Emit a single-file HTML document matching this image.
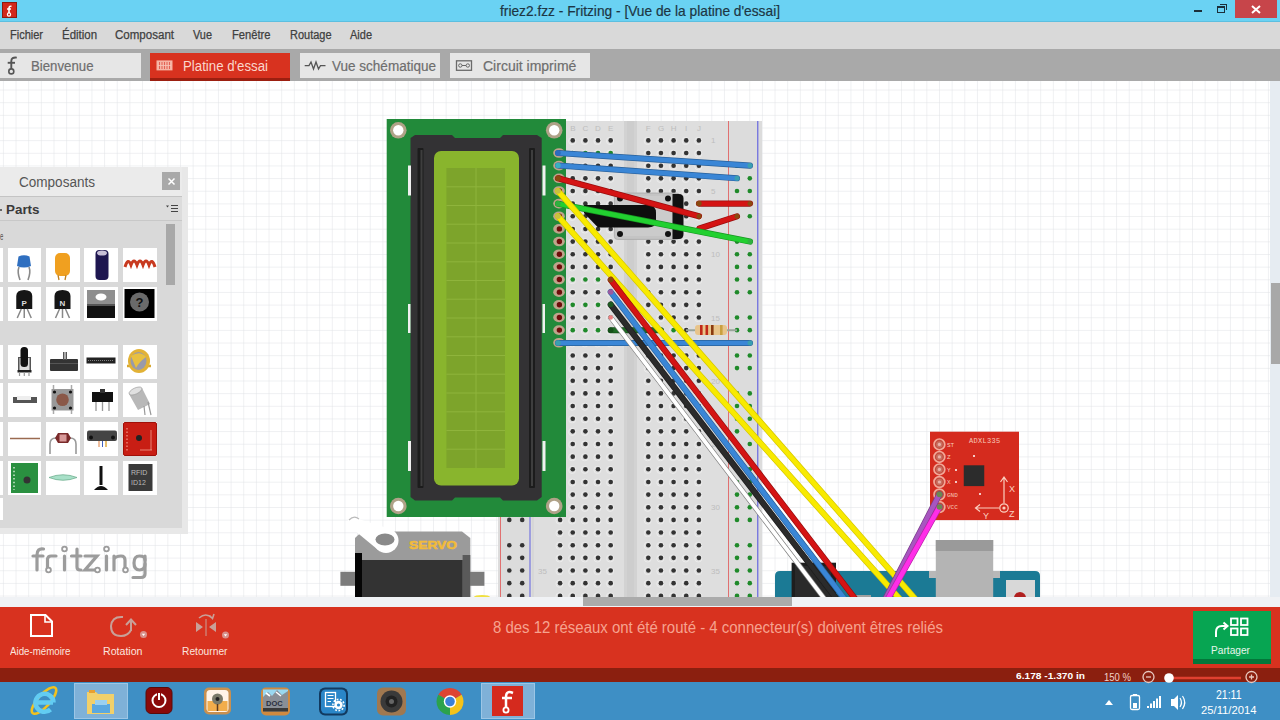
<!DOCTYPE html>
<html><head><meta charset="utf-8"><style>*{margin:0;padding:0;box-sizing:border-box}
html,body{width:1280px;height:720px;overflow:hidden;background:#fff;font-family:"Liberation Sans",sans-serif}
.a{position:absolute}
svg{position:absolute;overflow:visible}
</style></head><body>
<div class="a" style="left:0;top:0;width:1280px;height:22px;background:#6ad2f3"></div>
<div class="a" style="left:0;top:21px;width:1280px;height:1px;background:#5cbfe0"></div>
<div class="a" style="left:2px;top:2px;width:15px;height:16px;background:#d2281c;border:1px solid #8e1a10"></div>
<svg style="left:2px;top:2px" width="15" height="16"><path d="M9.5 4.5 Q7.5 3.5 7 6 L7 11 M5 7 L9 7" stroke="#fff" stroke-width="1.6" fill="none"/><circle cx="7" cy="12.5" r="1.6" stroke="#fff" stroke-width="1.2" fill="none"/></svg>
<div class="a" style="left:500px;top:3.00px;font-size:15px;line-height:15px;color:#1d3644;font-weight:normal;font-family:'Liberation Sans',sans-serif;white-space:nowrap;transform:scaleX(0.9157);transform-origin:0 0;-webkit-text-stroke:0.2px #1d3644;">friez2.fzz - Fritzing - [Vue de la platine d'essai]</div>
<div class="a" style="left:1194px;top:10px;width:8px;height:2px;background:#1b2f3a"></div>
<div class="a" style="left:1217px;top:6px;width:8px;height:7px;border:1.5px solid #1b2f3a;border-top-width:2px"></div>
<div class="a" style="left:1220px;top:4px;width:7px;height:6px;border-top:1.5px solid #1b2f3a;border-right:1.5px solid #1b2f3a"></div>
<div class="a" style="left:1235px;top:0;width:42px;height:18px;background:#c7454a"></div>
<svg style="left:1251px;top:5px" width="10" height="9"><path d="M1 1 L9 8 M9 1 L1 8" stroke="#fff" stroke-width="2"/></svg>
<div class="a" style="left:0;top:22px;width:1280px;height:27px;background:#d9d9d9"></div>
<div class="a" style="left:10px;top:29.00px;font-size:12px;line-height:12px;color:#404040;font-weight:normal;font-family:'Liberation Sans',sans-serif;white-space:nowrap;transform:scaleX(0.9165);transform-origin:0 0;-webkit-text-stroke:0.25px #404040;">Fichier</div>
<div class="a" style="left:62px;top:29.00px;font-size:12px;line-height:12px;color:#404040;font-weight:normal;font-family:'Liberation Sans',sans-serif;white-space:nowrap;transform:scaleX(0.9539);transform-origin:0 0;-webkit-text-stroke:0.25px #404040;">Édition</div>
<div class="a" style="left:115px;top:29.00px;font-size:12px;line-height:12px;color:#404040;font-weight:normal;font-family:'Liberation Sans',sans-serif;white-space:nowrap;transform:scaleX(0.9615);transform-origin:0 0;-webkit-text-stroke:0.25px #404040;">Composant</div>
<div class="a" style="left:193px;top:29.00px;font-size:12px;line-height:12px;color:#404040;font-weight:normal;font-family:'Liberation Sans',sans-serif;white-space:nowrap;transform:scaleX(0.9088);transform-origin:0 0;-webkit-text-stroke:0.25px #404040;">Vue</div>
<div class="a" style="left:232px;top:29.00px;font-size:12px;line-height:12px;color:#404040;font-weight:normal;font-family:'Liberation Sans',sans-serif;white-space:nowrap;transform:scaleX(0.9310);transform-origin:0 0;-webkit-text-stroke:0.25px #404040;">Fenêtre</div>
<div class="a" style="left:290px;top:29.00px;font-size:12px;line-height:12px;color:#404040;font-weight:normal;font-family:'Liberation Sans',sans-serif;white-space:nowrap;transform:scaleX(0.9147);transform-origin:0 0;-webkit-text-stroke:0.25px #404040;">Routage</div>
<div class="a" style="left:350px;top:29.00px;font-size:12px;line-height:12px;color:#404040;font-weight:normal;font-family:'Liberation Sans',sans-serif;white-space:nowrap;transform:scaleX(0.9160);transform-origin:0 0;-webkit-text-stroke:0.25px #404040;">Aide</div>
<div class="a" style="left:0;top:49px;width:1280px;height:32px;background:#a9a9a9"></div>
<div class="a" style="left:0;top:52.5px;width:141px;height:25.5px;background:#e6e6e6"></div>
<div class="a" style="left:150px;top:52.5px;width:140px;height:28px;background:#d8321f;border-bottom:3px solid #9c1f10"></div>
<div class="a" style="left:300px;top:52.5px;width:140px;height:25px;background:#e6e6e6"></div>
<div class="a" style="left:450px;top:52.5px;width:140px;height:25px;background:#e6e6e6"></div>
<div class="a" style="left:30.5px;top:59.00px;font-size:14px;line-height:14px;color:#6e6e6e;font-weight:normal;font-family:'Liberation Sans',sans-serif;white-space:nowrap;transform:scaleX(0.9446);transform-origin:0 0;-webkit-text-stroke:0.2px #6e6e6e;">Bienvenue</div>
<div class="a" style="left:183px;top:59.00px;font-size:14px;line-height:14px;color:#fbd7cc;font-weight:normal;font-family:'Liberation Sans',sans-serif;white-space:nowrap;transform:scaleX(0.9461);transform-origin:0 0;">Platine d'essai</div>
<div class="a" style="left:332px;top:59.00px;font-size:14px;line-height:14px;color:#6e6e6e;font-weight:normal;font-family:'Liberation Sans',sans-serif;white-space:nowrap;transform:scaleX(0.9660);transform-origin:0 0;-webkit-text-stroke:0.2px #6e6e6e;">Vue schématique</div>
<div class="a" style="left:483px;top:59.00px;font-size:14px;line-height:14px;color:#6e6e6e;font-weight:normal;font-family:'Liberation Sans',sans-serif;white-space:nowrap;-webkit-text-stroke:0.2px #6e6e6e;">Circuit imprimé</div>
<svg style="left:0;top:0" width="600" height="81"><path d="M16.8 57.6 Q11.3 57 11.3 61 L11.3 69" fill="none" stroke="#555" stroke-width="1.9"/><path d="M7.7 62.8 H15" stroke="#555" stroke-width="1.9"/><circle cx="11.3" cy="71.4" r="2.5" fill="none" stroke="#555" stroke-width="1.6"/><rect x="156.5" y="60.4" width="16" height="10" fill="#f6b4a4"/><path d="M159.5 62 V69 M162 62 V69 M164.5 62 V69 M167 62 V69 M169.5 62 V69" stroke="#e0584a" stroke-width="0.9"/><path d="M158 65.5 H171" stroke="#f6c8bc" stroke-width="0.8"/><path d="M304.7 65.6 H309 L311 62 L313.5 69 L316 62 L318.5 69 L320.5 65.6 H325.5" fill="none" stroke="#555" stroke-width="1.3"/><rect x="456.5" y="60.8" width="15" height="9.5" fill="none" stroke="#6a6a6a" stroke-width="1.3"/><circle cx="460.3" cy="65.5" r="1.7" fill="none" stroke="#666" stroke-width="1"/><circle cx="467.8" cy="65.5" r="1.7" fill="none" stroke="#666" stroke-width="1"/><path d="M462 65.5 H466" stroke="#666" stroke-width="1"/></svg>
<svg style="left:0;top:81px" width="1270" height="516" viewBox="0 81 1270 516"><defs><pattern id="g" x="2.9" y="1.0" width="12.65" height="12.65" patternUnits="userSpaceOnUse"><path d="M0 0 H12.65 M0 0 V12.65" stroke="#dfe2e5" stroke-width="1" fill="none"/></pattern><clipPath id="cv"><rect x="0" y="81" width="1270" height="516"/></clipPath></defs>
<rect x="0" y="81" width="1270" height="516" fill="#fff"/>
<rect x="0" y="81" width="1270" height="516" fill="url(#g)"/>
<g clip-path="url(#cv)">
<rect x="498" y="121" width="264" height="500" fill="#dedede"/>
<rect x="498" y="121" width="35" height="500" fill="#dcdcdc"/>
<rect x="532.5" y="121" width="1" height="500" fill="#cfcfcf"/>
<rect x="624" y="121" width="13" height="500" fill="#d2d2d2"/>
<rect x="627" y="121" width="7" height="500" fill="#cdcdcd"/>
<rect x="728" y="121" width="34" height="500" fill="#dcdcdc"/>
<rect x="500" y="121" width="1" height="500" fill="#e07070"/>
<rect x="529.5" y="121" width="1" height="500" fill="#6060e0"/>
<rect x="728" y="121" width="1" height="500" fill="#e07070"/>
<rect x="757.3" y="121" width="1" height="500" fill="#5050e0"/>
<g><circle cx="559.50" cy="141.00" r="3.6" fill="none" stroke="#ececec" stroke-width="1"/><circle cx="560.10" cy="140.40" r="2.3" fill="#333"/><circle cx="572.15" cy="141.00" r="3.6" fill="none" stroke="#ececec" stroke-width="1"/><circle cx="572.75" cy="140.40" r="2.3" fill="#333"/><circle cx="584.80" cy="141.00" r="3.6" fill="none" stroke="#ececec" stroke-width="1"/><circle cx="585.40" cy="140.40" r="2.3" fill="#333"/><circle cx="597.45" cy="141.00" r="3.6" fill="none" stroke="#ececec" stroke-width="1"/><circle cx="598.05" cy="140.40" r="2.3" fill="#333"/><circle cx="610.10" cy="141.00" r="3.6" fill="none" stroke="#ececec" stroke-width="1"/><circle cx="610.70" cy="140.40" r="2.3" fill="#333"/><circle cx="647.70" cy="141.00" r="3.6" fill="none" stroke="#ececec" stroke-width="1"/><circle cx="648.30" cy="140.40" r="2.3" fill="#333"/><circle cx="660.35" cy="141.00" r="3.6" fill="none" stroke="#ececec" stroke-width="1"/><circle cx="660.95" cy="140.40" r="2.3" fill="#333"/><circle cx="673.00" cy="141.00" r="3.6" fill="none" stroke="#ececec" stroke-width="1"/><circle cx="673.60" cy="140.40" r="2.3" fill="#333"/><circle cx="685.65" cy="141.00" r="3.6" fill="none" stroke="#ececec" stroke-width="1"/><circle cx="686.25" cy="140.40" r="2.3" fill="#333"/><circle cx="698.30" cy="141.00" r="3.6" fill="none" stroke="#ececec" stroke-width="1"/><circle cx="698.90" cy="140.40" r="2.3" fill="#333"/><circle cx="559.50" cy="153.65" r="3.6" fill="none" stroke="#ececec" stroke-width="1"/><circle cx="560.10" cy="153.05" r="2.3" fill="#1f8a2a"/><circle cx="572.15" cy="153.65" r="3.6" fill="none" stroke="#ececec" stroke-width="1"/><circle cx="572.75" cy="153.05" r="2.3" fill="#1f8a2a"/><circle cx="584.80" cy="153.65" r="3.6" fill="none" stroke="#ececec" stroke-width="1"/><circle cx="585.40" cy="153.05" r="2.3" fill="#1f8a2a"/><circle cx="597.45" cy="153.65" r="3.6" fill="none" stroke="#ececec" stroke-width="1"/><circle cx="598.05" cy="153.05" r="2.3" fill="#1f8a2a"/><circle cx="610.10" cy="153.65" r="3.6" fill="none" stroke="#ececec" stroke-width="1"/><circle cx="610.70" cy="153.05" r="2.3" fill="#1f8a2a"/><circle cx="647.70" cy="153.65" r="3.6" fill="none" stroke="#ececec" stroke-width="1"/><circle cx="648.30" cy="153.05" r="2.3" fill="#333"/><circle cx="660.35" cy="153.65" r="3.6" fill="none" stroke="#ececec" stroke-width="1"/><circle cx="660.95" cy="153.05" r="2.3" fill="#333"/><circle cx="673.00" cy="153.65" r="3.6" fill="none" stroke="#ececec" stroke-width="1"/><circle cx="673.60" cy="153.05" r="2.3" fill="#333"/><circle cx="685.65" cy="153.65" r="3.6" fill="none" stroke="#ececec" stroke-width="1"/><circle cx="686.25" cy="153.05" r="2.3" fill="#333"/><circle cx="698.30" cy="153.65" r="3.6" fill="none" stroke="#ececec" stroke-width="1"/><circle cx="698.90" cy="153.05" r="2.3" fill="#333"/><circle cx="559.50" cy="166.30" r="3.6" fill="none" stroke="#ececec" stroke-width="1"/><circle cx="560.10" cy="165.70" r="2.3" fill="#333"/><circle cx="572.15" cy="166.30" r="3.6" fill="none" stroke="#ececec" stroke-width="1"/><circle cx="572.75" cy="165.70" r="2.3" fill="#333"/><circle cx="584.80" cy="166.30" r="3.6" fill="none" stroke="#ececec" stroke-width="1"/><circle cx="585.40" cy="165.70" r="2.3" fill="#333"/><circle cx="597.45" cy="166.30" r="3.6" fill="none" stroke="#ececec" stroke-width="1"/><circle cx="598.05" cy="165.70" r="2.3" fill="#333"/><circle cx="610.10" cy="166.30" r="3.6" fill="none" stroke="#ececec" stroke-width="1"/><circle cx="610.70" cy="165.70" r="2.3" fill="#333"/><circle cx="647.70" cy="166.30" r="3.6" fill="none" stroke="#ececec" stroke-width="1"/><circle cx="648.30" cy="165.70" r="2.3" fill="#333"/><circle cx="660.35" cy="166.30" r="3.6" fill="none" stroke="#ececec" stroke-width="1"/><circle cx="660.95" cy="165.70" r="2.3" fill="#333"/><circle cx="673.00" cy="166.30" r="3.6" fill="none" stroke="#ececec" stroke-width="1"/><circle cx="673.60" cy="165.70" r="2.3" fill="#333"/><circle cx="685.65" cy="166.30" r="3.6" fill="none" stroke="#ececec" stroke-width="1"/><circle cx="686.25" cy="165.70" r="2.3" fill="#333"/><circle cx="698.30" cy="166.30" r="3.6" fill="none" stroke="#ececec" stroke-width="1"/><circle cx="698.90" cy="165.70" r="2.3" fill="#333"/><circle cx="737.0" cy="165.70" r="2.3" fill="#1f8a2a"/><circle cx="749.8" cy="165.70" r="2.3" fill="#1f8a2a"/><circle cx="509.3" cy="165.70" r="2.3" fill="#333"/><circle cx="522.2" cy="165.70" r="2.3" fill="#333"/><circle cx="559.50" cy="178.95" r="3.6" fill="none" stroke="#ececec" stroke-width="1"/><circle cx="560.10" cy="178.35" r="2.3" fill="#333"/><circle cx="572.15" cy="178.95" r="3.6" fill="none" stroke="#ececec" stroke-width="1"/><circle cx="572.75" cy="178.35" r="2.3" fill="#333"/><circle cx="584.80" cy="178.95" r="3.6" fill="none" stroke="#ececec" stroke-width="1"/><circle cx="585.40" cy="178.35" r="2.3" fill="#333"/><circle cx="597.45" cy="178.95" r="3.6" fill="none" stroke="#ececec" stroke-width="1"/><circle cx="598.05" cy="178.35" r="2.3" fill="#333"/><circle cx="610.10" cy="178.95" r="3.6" fill="none" stroke="#ececec" stroke-width="1"/><circle cx="610.70" cy="178.35" r="2.3" fill="#333"/><circle cx="647.70" cy="178.95" r="3.6" fill="none" stroke="#ececec" stroke-width="1"/><circle cx="648.30" cy="178.35" r="2.3" fill="#333"/><circle cx="660.35" cy="178.95" r="3.6" fill="none" stroke="#ececec" stroke-width="1"/><circle cx="660.95" cy="178.35" r="2.3" fill="#333"/><circle cx="673.00" cy="178.95" r="3.6" fill="none" stroke="#ececec" stroke-width="1"/><circle cx="673.60" cy="178.35" r="2.3" fill="#333"/><circle cx="685.65" cy="178.95" r="3.6" fill="none" stroke="#ececec" stroke-width="1"/><circle cx="686.25" cy="178.35" r="2.3" fill="#333"/><circle cx="698.30" cy="178.95" r="3.6" fill="none" stroke="#ececec" stroke-width="1"/><circle cx="698.90" cy="178.35" r="2.3" fill="#333"/><circle cx="737.0" cy="178.35" r="2.3" fill="#1f8a2a"/><circle cx="749.8" cy="178.35" r="2.3" fill="#1f8a2a"/><circle cx="509.3" cy="178.35" r="2.3" fill="#333"/><circle cx="522.2" cy="178.35" r="2.3" fill="#333"/><circle cx="559.50" cy="191.60" r="3.6" fill="none" stroke="#ececec" stroke-width="1"/><circle cx="560.10" cy="191.00" r="2.3" fill="#333"/><circle cx="572.15" cy="191.60" r="3.6" fill="none" stroke="#ececec" stroke-width="1"/><circle cx="572.75" cy="191.00" r="2.3" fill="#333"/><circle cx="584.80" cy="191.60" r="3.6" fill="none" stroke="#ececec" stroke-width="1"/><circle cx="585.40" cy="191.00" r="2.3" fill="#333"/><circle cx="597.45" cy="191.60" r="3.6" fill="none" stroke="#ececec" stroke-width="1"/><circle cx="598.05" cy="191.00" r="2.3" fill="#333"/><circle cx="610.10" cy="191.60" r="3.6" fill="none" stroke="#ececec" stroke-width="1"/><circle cx="610.70" cy="191.00" r="2.3" fill="#333"/><circle cx="647.70" cy="191.60" r="3.6" fill="none" stroke="#ececec" stroke-width="1"/><circle cx="648.30" cy="191.00" r="2.3" fill="#333"/><circle cx="660.35" cy="191.60" r="3.6" fill="none" stroke="#ececec" stroke-width="1"/><circle cx="660.95" cy="191.00" r="2.3" fill="#333"/><circle cx="673.00" cy="191.60" r="3.6" fill="none" stroke="#ececec" stroke-width="1"/><circle cx="673.60" cy="191.00" r="2.3" fill="#333"/><circle cx="685.65" cy="191.60" r="3.6" fill="none" stroke="#ececec" stroke-width="1"/><circle cx="686.25" cy="191.00" r="2.3" fill="#333"/><circle cx="698.30" cy="191.60" r="3.6" fill="none" stroke="#ececec" stroke-width="1"/><circle cx="698.90" cy="191.00" r="2.3" fill="#333"/><circle cx="737.0" cy="191.00" r="2.3" fill="#1f8a2a"/><circle cx="749.8" cy="191.00" r="2.3" fill="#1f8a2a"/><circle cx="509.3" cy="191.00" r="2.3" fill="#333"/><circle cx="522.2" cy="191.00" r="2.3" fill="#333"/><circle cx="559.50" cy="204.25" r="3.6" fill="none" stroke="#ececec" stroke-width="1"/><circle cx="560.10" cy="203.65" r="2.3" fill="#333"/><circle cx="572.15" cy="204.25" r="3.6" fill="none" stroke="#ececec" stroke-width="1"/><circle cx="572.75" cy="203.65" r="2.3" fill="#333"/><circle cx="584.80" cy="204.25" r="3.6" fill="none" stroke="#ececec" stroke-width="1"/><circle cx="585.40" cy="203.65" r="2.3" fill="#333"/><circle cx="597.45" cy="204.25" r="3.6" fill="none" stroke="#ececec" stroke-width="1"/><circle cx="598.05" cy="203.65" r="2.3" fill="#333"/><circle cx="610.10" cy="204.25" r="3.6" fill="none" stroke="#ececec" stroke-width="1"/><circle cx="610.70" cy="203.65" r="2.3" fill="#333"/><circle cx="647.70" cy="204.25" r="3.6" fill="none" stroke="#ececec" stroke-width="1"/><circle cx="648.30" cy="203.65" r="2.3" fill="#333"/><circle cx="660.35" cy="204.25" r="3.6" fill="none" stroke="#ececec" stroke-width="1"/><circle cx="660.95" cy="203.65" r="2.3" fill="#333"/><circle cx="673.00" cy="204.25" r="3.6" fill="none" stroke="#ececec" stroke-width="1"/><circle cx="673.60" cy="203.65" r="2.3" fill="#333"/><circle cx="685.65" cy="204.25" r="3.6" fill="none" stroke="#ececec" stroke-width="1"/><circle cx="686.25" cy="203.65" r="2.3" fill="#333"/><circle cx="698.30" cy="204.25" r="3.6" fill="none" stroke="#ececec" stroke-width="1"/><circle cx="698.90" cy="203.65" r="2.3" fill="#333"/><circle cx="737.0" cy="203.65" r="2.3" fill="#1f8a2a"/><circle cx="749.8" cy="203.65" r="2.3" fill="#1f8a2a"/><circle cx="509.3" cy="203.65" r="2.3" fill="#333"/><circle cx="522.2" cy="203.65" r="2.3" fill="#333"/><circle cx="559.50" cy="216.90" r="3.6" fill="none" stroke="#ececec" stroke-width="1"/><circle cx="560.10" cy="216.30" r="2.3" fill="#333"/><circle cx="572.15" cy="216.90" r="3.6" fill="none" stroke="#ececec" stroke-width="1"/><circle cx="572.75" cy="216.30" r="2.3" fill="#333"/><circle cx="584.80" cy="216.90" r="3.6" fill="none" stroke="#ececec" stroke-width="1"/><circle cx="585.40" cy="216.30" r="2.3" fill="#333"/><circle cx="597.45" cy="216.90" r="3.6" fill="none" stroke="#ececec" stroke-width="1"/><circle cx="598.05" cy="216.30" r="2.3" fill="#333"/><circle cx="610.10" cy="216.90" r="3.6" fill="none" stroke="#ececec" stroke-width="1"/><circle cx="610.70" cy="216.30" r="2.3" fill="#333"/><circle cx="647.70" cy="216.90" r="3.6" fill="none" stroke="#ececec" stroke-width="1"/><circle cx="648.30" cy="216.30" r="2.3" fill="#333"/><circle cx="660.35" cy="216.90" r="3.6" fill="none" stroke="#ececec" stroke-width="1"/><circle cx="660.95" cy="216.30" r="2.3" fill="#333"/><circle cx="673.00" cy="216.90" r="3.6" fill="none" stroke="#ececec" stroke-width="1"/><circle cx="673.60" cy="216.30" r="2.3" fill="#333"/><circle cx="685.65" cy="216.90" r="3.6" fill="none" stroke="#ececec" stroke-width="1"/><circle cx="686.25" cy="216.30" r="2.3" fill="#333"/><circle cx="698.30" cy="216.90" r="3.6" fill="none" stroke="#ececec" stroke-width="1"/><circle cx="698.90" cy="216.30" r="2.3" fill="#333"/><circle cx="737.0" cy="216.30" r="2.3" fill="#1f8a2a"/><circle cx="749.8" cy="216.30" r="2.3" fill="#1f8a2a"/><circle cx="509.3" cy="216.30" r="2.3" fill="#333"/><circle cx="522.2" cy="216.30" r="2.3" fill="#333"/><circle cx="559.50" cy="229.55" r="3.6" fill="none" stroke="#ececec" stroke-width="1"/><circle cx="560.10" cy="228.95" r="2.3" fill="#333"/><circle cx="572.15" cy="229.55" r="3.6" fill="none" stroke="#ececec" stroke-width="1"/><circle cx="572.75" cy="228.95" r="2.3" fill="#333"/><circle cx="584.80" cy="229.55" r="3.6" fill="none" stroke="#ececec" stroke-width="1"/><circle cx="585.40" cy="228.95" r="2.3" fill="#333"/><circle cx="597.45" cy="229.55" r="3.6" fill="none" stroke="#ececec" stroke-width="1"/><circle cx="598.05" cy="228.95" r="2.3" fill="#333"/><circle cx="610.10" cy="229.55" r="3.6" fill="none" stroke="#ececec" stroke-width="1"/><circle cx="610.70" cy="228.95" r="2.3" fill="#333"/><circle cx="647.70" cy="229.55" r="3.6" fill="none" stroke="#ececec" stroke-width="1"/><circle cx="648.30" cy="228.95" r="2.3" fill="#333"/><circle cx="660.35" cy="229.55" r="3.6" fill="none" stroke="#ececec" stroke-width="1"/><circle cx="660.95" cy="228.95" r="2.3" fill="#333"/><circle cx="673.00" cy="229.55" r="3.6" fill="none" stroke="#ececec" stroke-width="1"/><circle cx="673.60" cy="228.95" r="2.3" fill="#333"/><circle cx="685.65" cy="229.55" r="3.6" fill="none" stroke="#ececec" stroke-width="1"/><circle cx="686.25" cy="228.95" r="2.3" fill="#333"/><circle cx="698.30" cy="229.55" r="3.6" fill="none" stroke="#ececec" stroke-width="1"/><circle cx="698.90" cy="228.95" r="2.3" fill="#333"/><circle cx="559.50" cy="242.20" r="3.6" fill="none" stroke="#ececec" stroke-width="1"/><circle cx="560.10" cy="241.60" r="2.3" fill="#333"/><circle cx="572.15" cy="242.20" r="3.6" fill="none" stroke="#ececec" stroke-width="1"/><circle cx="572.75" cy="241.60" r="2.3" fill="#333"/><circle cx="584.80" cy="242.20" r="3.6" fill="none" stroke="#ececec" stroke-width="1"/><circle cx="585.40" cy="241.60" r="2.3" fill="#333"/><circle cx="597.45" cy="242.20" r="3.6" fill="none" stroke="#ececec" stroke-width="1"/><circle cx="598.05" cy="241.60" r="2.3" fill="#333"/><circle cx="610.10" cy="242.20" r="3.6" fill="none" stroke="#ececec" stroke-width="1"/><circle cx="610.70" cy="241.60" r="2.3" fill="#333"/><circle cx="647.70" cy="242.20" r="3.6" fill="none" stroke="#ececec" stroke-width="1"/><circle cx="648.30" cy="241.60" r="2.3" fill="#333"/><circle cx="660.35" cy="242.20" r="3.6" fill="none" stroke="#ececec" stroke-width="1"/><circle cx="660.95" cy="241.60" r="2.3" fill="#333"/><circle cx="673.00" cy="242.20" r="3.6" fill="none" stroke="#ececec" stroke-width="1"/><circle cx="673.60" cy="241.60" r="2.3" fill="#333"/><circle cx="685.65" cy="242.20" r="3.6" fill="none" stroke="#ececec" stroke-width="1"/><circle cx="686.25" cy="241.60" r="2.3" fill="#333"/><circle cx="698.30" cy="242.20" r="3.6" fill="none" stroke="#ececec" stroke-width="1"/><circle cx="698.90" cy="241.60" r="2.3" fill="#333"/><circle cx="737.0" cy="241.60" r="2.3" fill="#1f8a2a"/><circle cx="749.8" cy="241.60" r="2.3" fill="#1f8a2a"/><circle cx="509.3" cy="241.60" r="2.3" fill="#333"/><circle cx="522.2" cy="241.60" r="2.3" fill="#333"/><circle cx="559.50" cy="254.85" r="3.6" fill="none" stroke="#ececec" stroke-width="1"/><circle cx="560.10" cy="254.25" r="2.3" fill="#333"/><circle cx="572.15" cy="254.85" r="3.6" fill="none" stroke="#ececec" stroke-width="1"/><circle cx="572.75" cy="254.25" r="2.3" fill="#333"/><circle cx="584.80" cy="254.85" r="3.6" fill="none" stroke="#ececec" stroke-width="1"/><circle cx="585.40" cy="254.25" r="2.3" fill="#333"/><circle cx="597.45" cy="254.85" r="3.6" fill="none" stroke="#ececec" stroke-width="1"/><circle cx="598.05" cy="254.25" r="2.3" fill="#333"/><circle cx="610.10" cy="254.85" r="3.6" fill="none" stroke="#ececec" stroke-width="1"/><circle cx="610.70" cy="254.25" r="2.3" fill="#333"/><circle cx="647.70" cy="254.85" r="3.6" fill="none" stroke="#ececec" stroke-width="1"/><circle cx="648.30" cy="254.25" r="2.3" fill="#333"/><circle cx="660.35" cy="254.85" r="3.6" fill="none" stroke="#ececec" stroke-width="1"/><circle cx="660.95" cy="254.25" r="2.3" fill="#333"/><circle cx="673.00" cy="254.85" r="3.6" fill="none" stroke="#ececec" stroke-width="1"/><circle cx="673.60" cy="254.25" r="2.3" fill="#333"/><circle cx="685.65" cy="254.85" r="3.6" fill="none" stroke="#ececec" stroke-width="1"/><circle cx="686.25" cy="254.25" r="2.3" fill="#333"/><circle cx="698.30" cy="254.85" r="3.6" fill="none" stroke="#ececec" stroke-width="1"/><circle cx="698.90" cy="254.25" r="2.3" fill="#333"/><circle cx="737.0" cy="254.25" r="2.3" fill="#1f8a2a"/><circle cx="749.8" cy="254.25" r="2.3" fill="#1f8a2a"/><circle cx="509.3" cy="254.25" r="2.3" fill="#333"/><circle cx="522.2" cy="254.25" r="2.3" fill="#333"/><circle cx="559.50" cy="267.50" r="3.6" fill="none" stroke="#ececec" stroke-width="1"/><circle cx="560.10" cy="266.90" r="2.3" fill="#333"/><circle cx="572.15" cy="267.50" r="3.6" fill="none" stroke="#ececec" stroke-width="1"/><circle cx="572.75" cy="266.90" r="2.3" fill="#333"/><circle cx="584.80" cy="267.50" r="3.6" fill="none" stroke="#ececec" stroke-width="1"/><circle cx="585.40" cy="266.90" r="2.3" fill="#333"/><circle cx="597.45" cy="267.50" r="3.6" fill="none" stroke="#ececec" stroke-width="1"/><circle cx="598.05" cy="266.90" r="2.3" fill="#333"/><circle cx="610.10" cy="267.50" r="3.6" fill="none" stroke="#ececec" stroke-width="1"/><circle cx="610.70" cy="266.90" r="2.3" fill="#333"/><circle cx="647.70" cy="267.50" r="3.6" fill="none" stroke="#ececec" stroke-width="1"/><circle cx="648.30" cy="266.90" r="2.3" fill="#333"/><circle cx="660.35" cy="267.50" r="3.6" fill="none" stroke="#ececec" stroke-width="1"/><circle cx="660.95" cy="266.90" r="2.3" fill="#333"/><circle cx="673.00" cy="267.50" r="3.6" fill="none" stroke="#ececec" stroke-width="1"/><circle cx="673.60" cy="266.90" r="2.3" fill="#333"/><circle cx="685.65" cy="267.50" r="3.6" fill="none" stroke="#ececec" stroke-width="1"/><circle cx="686.25" cy="266.90" r="2.3" fill="#333"/><circle cx="698.30" cy="267.50" r="3.6" fill="none" stroke="#ececec" stroke-width="1"/><circle cx="698.90" cy="266.90" r="2.3" fill="#333"/><circle cx="737.0" cy="266.90" r="2.3" fill="#1f8a2a"/><circle cx="749.8" cy="266.90" r="2.3" fill="#1f8a2a"/><circle cx="509.3" cy="266.90" r="2.3" fill="#333"/><circle cx="522.2" cy="266.90" r="2.3" fill="#333"/><circle cx="559.50" cy="280.15" r="3.6" fill="none" stroke="#ececec" stroke-width="1"/><circle cx="560.10" cy="279.55" r="2.3" fill="#1f8a2a"/><circle cx="572.15" cy="280.15" r="3.6" fill="none" stroke="#ececec" stroke-width="1"/><circle cx="572.75" cy="279.55" r="2.3" fill="#1f8a2a"/><circle cx="584.80" cy="280.15" r="3.6" fill="none" stroke="#ececec" stroke-width="1"/><circle cx="585.40" cy="279.55" r="2.3" fill="#1f8a2a"/><circle cx="597.45" cy="280.15" r="3.6" fill="none" stroke="#ececec" stroke-width="1"/><circle cx="598.05" cy="279.55" r="2.3" fill="#1f8a2a"/><circle cx="610.10" cy="280.15" r="3.6" fill="none" stroke="#ececec" stroke-width="1"/><circle cx="610.70" cy="279.55" r="2.3" fill="#1f8a2a"/><circle cx="647.70" cy="280.15" r="3.6" fill="none" stroke="#ececec" stroke-width="1"/><circle cx="648.30" cy="279.55" r="2.3" fill="#333"/><circle cx="660.35" cy="280.15" r="3.6" fill="none" stroke="#ececec" stroke-width="1"/><circle cx="660.95" cy="279.55" r="2.3" fill="#333"/><circle cx="673.00" cy="280.15" r="3.6" fill="none" stroke="#ececec" stroke-width="1"/><circle cx="673.60" cy="279.55" r="2.3" fill="#333"/><circle cx="685.65" cy="280.15" r="3.6" fill="none" stroke="#ececec" stroke-width="1"/><circle cx="686.25" cy="279.55" r="2.3" fill="#333"/><circle cx="698.30" cy="280.15" r="3.6" fill="none" stroke="#ececec" stroke-width="1"/><circle cx="698.90" cy="279.55" r="2.3" fill="#333"/><circle cx="737.0" cy="279.55" r="2.3" fill="#1f8a2a"/><circle cx="749.8" cy="279.55" r="2.3" fill="#1f8a2a"/><circle cx="509.3" cy="279.55" r="2.3" fill="#333"/><circle cx="522.2" cy="279.55" r="2.3" fill="#333"/><circle cx="559.50" cy="292.80" r="3.6" fill="none" stroke="#ececec" stroke-width="1"/><circle cx="560.10" cy="292.20" r="2.3" fill="#333"/><circle cx="572.15" cy="292.80" r="3.6" fill="none" stroke="#ececec" stroke-width="1"/><circle cx="572.75" cy="292.20" r="2.3" fill="#333"/><circle cx="584.80" cy="292.80" r="3.6" fill="none" stroke="#ececec" stroke-width="1"/><circle cx="585.40" cy="292.20" r="2.3" fill="#333"/><circle cx="597.45" cy="292.80" r="3.6" fill="none" stroke="#ececec" stroke-width="1"/><circle cx="598.05" cy="292.20" r="2.3" fill="#333"/><circle cx="610.10" cy="292.80" r="3.6" fill="none" stroke="#ececec" stroke-width="1"/><circle cx="610.70" cy="292.20" r="2.3" fill="#333"/><circle cx="647.70" cy="292.80" r="3.6" fill="none" stroke="#ececec" stroke-width="1"/><circle cx="648.30" cy="292.20" r="2.3" fill="#333"/><circle cx="660.35" cy="292.80" r="3.6" fill="none" stroke="#ececec" stroke-width="1"/><circle cx="660.95" cy="292.20" r="2.3" fill="#333"/><circle cx="673.00" cy="292.80" r="3.6" fill="none" stroke="#ececec" stroke-width="1"/><circle cx="673.60" cy="292.20" r="2.3" fill="#333"/><circle cx="685.65" cy="292.80" r="3.6" fill="none" stroke="#ececec" stroke-width="1"/><circle cx="686.25" cy="292.20" r="2.3" fill="#333"/><circle cx="698.30" cy="292.80" r="3.6" fill="none" stroke="#ececec" stroke-width="1"/><circle cx="698.90" cy="292.20" r="2.3" fill="#333"/><circle cx="737.0" cy="292.20" r="2.3" fill="#1f8a2a"/><circle cx="749.8" cy="292.20" r="2.3" fill="#1f8a2a"/><circle cx="509.3" cy="292.20" r="2.3" fill="#333"/><circle cx="522.2" cy="292.20" r="2.3" fill="#333"/><circle cx="559.50" cy="305.45" r="3.6" fill="none" stroke="#ececec" stroke-width="1"/><circle cx="560.10" cy="304.85" r="2.3" fill="#1f8a2a"/><circle cx="572.15" cy="305.45" r="3.6" fill="none" stroke="#ececec" stroke-width="1"/><circle cx="572.75" cy="304.85" r="2.3" fill="#1f8a2a"/><circle cx="584.80" cy="305.45" r="3.6" fill="none" stroke="#ececec" stroke-width="1"/><circle cx="585.40" cy="304.85" r="2.3" fill="#1f8a2a"/><circle cx="597.45" cy="305.45" r="3.6" fill="none" stroke="#ececec" stroke-width="1"/><circle cx="598.05" cy="304.85" r="2.3" fill="#1f8a2a"/><circle cx="610.10" cy="305.45" r="3.6" fill="none" stroke="#ececec" stroke-width="1"/><circle cx="610.70" cy="304.85" r="2.3" fill="#1f8a2a"/><circle cx="647.70" cy="305.45" r="3.6" fill="none" stroke="#ececec" stroke-width="1"/><circle cx="648.30" cy="304.85" r="2.3" fill="#333"/><circle cx="660.35" cy="305.45" r="3.6" fill="none" stroke="#ececec" stroke-width="1"/><circle cx="660.95" cy="304.85" r="2.3" fill="#333"/><circle cx="673.00" cy="305.45" r="3.6" fill="none" stroke="#ececec" stroke-width="1"/><circle cx="673.60" cy="304.85" r="2.3" fill="#333"/><circle cx="685.65" cy="305.45" r="3.6" fill="none" stroke="#ececec" stroke-width="1"/><circle cx="686.25" cy="304.85" r="2.3" fill="#333"/><circle cx="698.30" cy="305.45" r="3.6" fill="none" stroke="#ececec" stroke-width="1"/><circle cx="698.90" cy="304.85" r="2.3" fill="#333"/><circle cx="559.50" cy="318.10" r="3.6" fill="none" stroke="#ececec" stroke-width="1"/><circle cx="560.10" cy="317.50" r="2.3" fill="#333"/><circle cx="572.15" cy="318.10" r="3.6" fill="none" stroke="#ececec" stroke-width="1"/><circle cx="572.75" cy="317.50" r="2.3" fill="#333"/><circle cx="584.80" cy="318.10" r="3.6" fill="none" stroke="#ececec" stroke-width="1"/><circle cx="585.40" cy="317.50" r="2.3" fill="#333"/><circle cx="597.45" cy="318.10" r="3.6" fill="none" stroke="#ececec" stroke-width="1"/><circle cx="598.05" cy="317.50" r="2.3" fill="#333"/><circle cx="610.10" cy="318.10" r="3.6" fill="none" stroke="#ececec" stroke-width="1"/><circle cx="610.70" cy="317.50" r="2.3" fill="#333"/><circle cx="647.70" cy="318.10" r="3.6" fill="none" stroke="#ececec" stroke-width="1"/><circle cx="648.30" cy="317.50" r="2.3" fill="#333"/><circle cx="660.35" cy="318.10" r="3.6" fill="none" stroke="#ececec" stroke-width="1"/><circle cx="660.95" cy="317.50" r="2.3" fill="#333"/><circle cx="673.00" cy="318.10" r="3.6" fill="none" stroke="#ececec" stroke-width="1"/><circle cx="673.60" cy="317.50" r="2.3" fill="#333"/><circle cx="685.65" cy="318.10" r="3.6" fill="none" stroke="#ececec" stroke-width="1"/><circle cx="686.25" cy="317.50" r="2.3" fill="#333"/><circle cx="698.30" cy="318.10" r="3.6" fill="none" stroke="#ececec" stroke-width="1"/><circle cx="698.90" cy="317.50" r="2.3" fill="#333"/><circle cx="737.0" cy="317.50" r="2.3" fill="#1f8a2a"/><circle cx="749.8" cy="317.50" r="2.3" fill="#1f8a2a"/><circle cx="509.3" cy="317.50" r="2.3" fill="#333"/><circle cx="522.2" cy="317.50" r="2.3" fill="#333"/><circle cx="559.50" cy="330.75" r="3.6" fill="none" stroke="#ececec" stroke-width="1"/><circle cx="560.10" cy="330.15" r="2.3" fill="#1f8a2a"/><circle cx="572.15" cy="330.75" r="3.6" fill="none" stroke="#ececec" stroke-width="1"/><circle cx="572.75" cy="330.15" r="2.3" fill="#1f8a2a"/><circle cx="584.80" cy="330.75" r="3.6" fill="none" stroke="#ececec" stroke-width="1"/><circle cx="585.40" cy="330.15" r="2.3" fill="#1f8a2a"/><circle cx="597.45" cy="330.75" r="3.6" fill="none" stroke="#ececec" stroke-width="1"/><circle cx="598.05" cy="330.15" r="2.3" fill="#1f8a2a"/><circle cx="610.10" cy="330.75" r="3.6" fill="none" stroke="#ececec" stroke-width="1"/><circle cx="610.70" cy="330.15" r="2.3" fill="#1f8a2a"/><circle cx="647.70" cy="330.75" r="3.6" fill="none" stroke="#ececec" stroke-width="1"/><circle cx="648.30" cy="330.15" r="2.3" fill="#333"/><circle cx="660.35" cy="330.75" r="3.6" fill="none" stroke="#ececec" stroke-width="1"/><circle cx="660.95" cy="330.15" r="2.3" fill="#333"/><circle cx="673.00" cy="330.75" r="3.6" fill="none" stroke="#ececec" stroke-width="1"/><circle cx="673.60" cy="330.15" r="2.3" fill="#1f8a2a"/><circle cx="685.65" cy="330.75" r="3.6" fill="none" stroke="#ececec" stroke-width="1"/><circle cx="686.25" cy="330.15" r="2.3" fill="#333"/><circle cx="698.30" cy="330.75" r="3.6" fill="none" stroke="#ececec" stroke-width="1"/><circle cx="698.90" cy="330.15" r="2.3" fill="#333"/><circle cx="737.0" cy="330.15" r="2.3" fill="#1f8a2a"/><circle cx="749.8" cy="330.15" r="2.3" fill="#1f8a2a"/><circle cx="509.3" cy="330.15" r="2.3" fill="#333"/><circle cx="522.2" cy="330.15" r="2.3" fill="#333"/><circle cx="559.50" cy="343.40" r="3.6" fill="none" stroke="#ececec" stroke-width="1"/><circle cx="560.10" cy="342.80" r="2.3" fill="#333"/><circle cx="572.15" cy="343.40" r="3.6" fill="none" stroke="#ececec" stroke-width="1"/><circle cx="572.75" cy="342.80" r="2.3" fill="#333"/><circle cx="584.80" cy="343.40" r="3.6" fill="none" stroke="#ececec" stroke-width="1"/><circle cx="585.40" cy="342.80" r="2.3" fill="#333"/><circle cx="597.45" cy="343.40" r="3.6" fill="none" stroke="#ececec" stroke-width="1"/><circle cx="598.05" cy="342.80" r="2.3" fill="#333"/><circle cx="610.10" cy="343.40" r="3.6" fill="none" stroke="#ececec" stroke-width="1"/><circle cx="610.70" cy="342.80" r="2.3" fill="#333"/><circle cx="647.70" cy="343.40" r="3.6" fill="none" stroke="#ececec" stroke-width="1"/><circle cx="648.30" cy="342.80" r="2.3" fill="#333"/><circle cx="660.35" cy="343.40" r="3.6" fill="none" stroke="#ececec" stroke-width="1"/><circle cx="660.95" cy="342.80" r="2.3" fill="#333"/><circle cx="673.00" cy="343.40" r="3.6" fill="none" stroke="#ececec" stroke-width="1"/><circle cx="673.60" cy="342.80" r="2.3" fill="#333"/><circle cx="685.65" cy="343.40" r="3.6" fill="none" stroke="#ececec" stroke-width="1"/><circle cx="686.25" cy="342.80" r="2.3" fill="#333"/><circle cx="698.30" cy="343.40" r="3.6" fill="none" stroke="#ececec" stroke-width="1"/><circle cx="698.90" cy="342.80" r="2.3" fill="#333"/><circle cx="737.0" cy="342.80" r="2.3" fill="#1f8a2a"/><circle cx="749.8" cy="342.80" r="2.3" fill="#1f8a2a"/><circle cx="509.3" cy="342.80" r="2.3" fill="#333"/><circle cx="522.2" cy="342.80" r="2.3" fill="#333"/><circle cx="559.50" cy="356.05" r="3.6" fill="none" stroke="#ececec" stroke-width="1"/><circle cx="560.10" cy="355.45" r="2.3" fill="#333"/><circle cx="572.15" cy="356.05" r="3.6" fill="none" stroke="#ececec" stroke-width="1"/><circle cx="572.75" cy="355.45" r="2.3" fill="#333"/><circle cx="584.80" cy="356.05" r="3.6" fill="none" stroke="#ececec" stroke-width="1"/><circle cx="585.40" cy="355.45" r="2.3" fill="#333"/><circle cx="597.45" cy="356.05" r="3.6" fill="none" stroke="#ececec" stroke-width="1"/><circle cx="598.05" cy="355.45" r="2.3" fill="#333"/><circle cx="610.10" cy="356.05" r="3.6" fill="none" stroke="#ececec" stroke-width="1"/><circle cx="610.70" cy="355.45" r="2.3" fill="#333"/><circle cx="647.70" cy="356.05" r="3.6" fill="none" stroke="#ececec" stroke-width="1"/><circle cx="648.30" cy="355.45" r="2.3" fill="#333"/><circle cx="660.35" cy="356.05" r="3.6" fill="none" stroke="#ececec" stroke-width="1"/><circle cx="660.95" cy="355.45" r="2.3" fill="#333"/><circle cx="673.00" cy="356.05" r="3.6" fill="none" stroke="#ececec" stroke-width="1"/><circle cx="673.60" cy="355.45" r="2.3" fill="#333"/><circle cx="685.65" cy="356.05" r="3.6" fill="none" stroke="#ececec" stroke-width="1"/><circle cx="686.25" cy="355.45" r="2.3" fill="#333"/><circle cx="698.30" cy="356.05" r="3.6" fill="none" stroke="#ececec" stroke-width="1"/><circle cx="698.90" cy="355.45" r="2.3" fill="#333"/><circle cx="737.0" cy="355.45" r="2.3" fill="#1f8a2a"/><circle cx="749.8" cy="355.45" r="2.3" fill="#1f8a2a"/><circle cx="509.3" cy="355.45" r="2.3" fill="#333"/><circle cx="522.2" cy="355.45" r="2.3" fill="#333"/><circle cx="559.50" cy="368.70" r="3.6" fill="none" stroke="#ececec" stroke-width="1"/><circle cx="560.10" cy="368.10" r="2.3" fill="#333"/><circle cx="572.15" cy="368.70" r="3.6" fill="none" stroke="#ececec" stroke-width="1"/><circle cx="572.75" cy="368.10" r="2.3" fill="#333"/><circle cx="584.80" cy="368.70" r="3.6" fill="none" stroke="#ececec" stroke-width="1"/><circle cx="585.40" cy="368.10" r="2.3" fill="#333"/><circle cx="597.45" cy="368.70" r="3.6" fill="none" stroke="#ececec" stroke-width="1"/><circle cx="598.05" cy="368.10" r="2.3" fill="#333"/><circle cx="610.10" cy="368.70" r="3.6" fill="none" stroke="#ececec" stroke-width="1"/><circle cx="610.70" cy="368.10" r="2.3" fill="#333"/><circle cx="647.70" cy="368.70" r="3.6" fill="none" stroke="#ececec" stroke-width="1"/><circle cx="648.30" cy="368.10" r="2.3" fill="#333"/><circle cx="660.35" cy="368.70" r="3.6" fill="none" stroke="#ececec" stroke-width="1"/><circle cx="660.95" cy="368.10" r="2.3" fill="#333"/><circle cx="673.00" cy="368.70" r="3.6" fill="none" stroke="#ececec" stroke-width="1"/><circle cx="673.60" cy="368.10" r="2.3" fill="#333"/><circle cx="685.65" cy="368.70" r="3.6" fill="none" stroke="#ececec" stroke-width="1"/><circle cx="686.25" cy="368.10" r="2.3" fill="#333"/><circle cx="698.30" cy="368.70" r="3.6" fill="none" stroke="#ececec" stroke-width="1"/><circle cx="698.90" cy="368.10" r="2.3" fill="#333"/><circle cx="737.0" cy="368.10" r="2.3" fill="#1f8a2a"/><circle cx="749.8" cy="368.10" r="2.3" fill="#1f8a2a"/><circle cx="509.3" cy="368.10" r="2.3" fill="#333"/><circle cx="522.2" cy="368.10" r="2.3" fill="#333"/><circle cx="559.50" cy="381.35" r="3.6" fill="none" stroke="#ececec" stroke-width="1"/><circle cx="560.10" cy="380.75" r="2.3" fill="#333"/><circle cx="572.15" cy="381.35" r="3.6" fill="none" stroke="#ececec" stroke-width="1"/><circle cx="572.75" cy="380.75" r="2.3" fill="#333"/><circle cx="584.80" cy="381.35" r="3.6" fill="none" stroke="#ececec" stroke-width="1"/><circle cx="585.40" cy="380.75" r="2.3" fill="#333"/><circle cx="597.45" cy="381.35" r="3.6" fill="none" stroke="#ececec" stroke-width="1"/><circle cx="598.05" cy="380.75" r="2.3" fill="#333"/><circle cx="610.10" cy="381.35" r="3.6" fill="none" stroke="#ececec" stroke-width="1"/><circle cx="610.70" cy="380.75" r="2.3" fill="#333"/><circle cx="647.70" cy="381.35" r="3.6" fill="none" stroke="#ececec" stroke-width="1"/><circle cx="648.30" cy="380.75" r="2.3" fill="#333"/><circle cx="660.35" cy="381.35" r="3.6" fill="none" stroke="#ececec" stroke-width="1"/><circle cx="660.95" cy="380.75" r="2.3" fill="#333"/><circle cx="673.00" cy="381.35" r="3.6" fill="none" stroke="#ececec" stroke-width="1"/><circle cx="673.60" cy="380.75" r="2.3" fill="#333"/><circle cx="685.65" cy="381.35" r="3.6" fill="none" stroke="#ececec" stroke-width="1"/><circle cx="686.25" cy="380.75" r="2.3" fill="#333"/><circle cx="698.30" cy="381.35" r="3.6" fill="none" stroke="#ececec" stroke-width="1"/><circle cx="698.90" cy="380.75" r="2.3" fill="#333"/><circle cx="559.50" cy="394.00" r="3.6" fill="none" stroke="#ececec" stroke-width="1"/><circle cx="560.10" cy="393.40" r="2.3" fill="#333"/><circle cx="572.15" cy="394.00" r="3.6" fill="none" stroke="#ececec" stroke-width="1"/><circle cx="572.75" cy="393.40" r="2.3" fill="#333"/><circle cx="584.80" cy="394.00" r="3.6" fill="none" stroke="#ececec" stroke-width="1"/><circle cx="585.40" cy="393.40" r="2.3" fill="#333"/><circle cx="597.45" cy="394.00" r="3.6" fill="none" stroke="#ececec" stroke-width="1"/><circle cx="598.05" cy="393.40" r="2.3" fill="#333"/><circle cx="610.10" cy="394.00" r="3.6" fill="none" stroke="#ececec" stroke-width="1"/><circle cx="610.70" cy="393.40" r="2.3" fill="#333"/><circle cx="647.70" cy="394.00" r="3.6" fill="none" stroke="#ececec" stroke-width="1"/><circle cx="648.30" cy="393.40" r="2.3" fill="#333"/><circle cx="660.35" cy="394.00" r="3.6" fill="none" stroke="#ececec" stroke-width="1"/><circle cx="660.95" cy="393.40" r="2.3" fill="#333"/><circle cx="673.00" cy="394.00" r="3.6" fill="none" stroke="#ececec" stroke-width="1"/><circle cx="673.60" cy="393.40" r="2.3" fill="#333"/><circle cx="685.65" cy="394.00" r="3.6" fill="none" stroke="#ececec" stroke-width="1"/><circle cx="686.25" cy="393.40" r="2.3" fill="#333"/><circle cx="698.30" cy="394.00" r="3.6" fill="none" stroke="#ececec" stroke-width="1"/><circle cx="698.90" cy="393.40" r="2.3" fill="#333"/><circle cx="737.0" cy="393.40" r="2.3" fill="#1f8a2a"/><circle cx="749.8" cy="393.40" r="2.3" fill="#1f8a2a"/><circle cx="509.3" cy="393.40" r="2.3" fill="#333"/><circle cx="522.2" cy="393.40" r="2.3" fill="#333"/><circle cx="559.50" cy="406.65" r="3.6" fill="none" stroke="#ececec" stroke-width="1"/><circle cx="560.10" cy="406.05" r="2.3" fill="#333"/><circle cx="572.15" cy="406.65" r="3.6" fill="none" stroke="#ececec" stroke-width="1"/><circle cx="572.75" cy="406.05" r="2.3" fill="#333"/><circle cx="584.80" cy="406.65" r="3.6" fill="none" stroke="#ececec" stroke-width="1"/><circle cx="585.40" cy="406.05" r="2.3" fill="#333"/><circle cx="597.45" cy="406.65" r="3.6" fill="none" stroke="#ececec" stroke-width="1"/><circle cx="598.05" cy="406.05" r="2.3" fill="#333"/><circle cx="610.10" cy="406.65" r="3.6" fill="none" stroke="#ececec" stroke-width="1"/><circle cx="610.70" cy="406.05" r="2.3" fill="#333"/><circle cx="647.70" cy="406.65" r="3.6" fill="none" stroke="#ececec" stroke-width="1"/><circle cx="648.30" cy="406.05" r="2.3" fill="#333"/><circle cx="660.35" cy="406.65" r="3.6" fill="none" stroke="#ececec" stroke-width="1"/><circle cx="660.95" cy="406.05" r="2.3" fill="#333"/><circle cx="673.00" cy="406.65" r="3.6" fill="none" stroke="#ececec" stroke-width="1"/><circle cx="673.60" cy="406.05" r="2.3" fill="#333"/><circle cx="685.65" cy="406.65" r="3.6" fill="none" stroke="#ececec" stroke-width="1"/><circle cx="686.25" cy="406.05" r="2.3" fill="#333"/><circle cx="698.30" cy="406.65" r="3.6" fill="none" stroke="#ececec" stroke-width="1"/><circle cx="698.90" cy="406.05" r="2.3" fill="#333"/><circle cx="737.0" cy="406.05" r="2.3" fill="#1f8a2a"/><circle cx="749.8" cy="406.05" r="2.3" fill="#1f8a2a"/><circle cx="509.3" cy="406.05" r="2.3" fill="#333"/><circle cx="522.2" cy="406.05" r="2.3" fill="#333"/><circle cx="559.50" cy="419.30" r="3.6" fill="none" stroke="#ececec" stroke-width="1"/><circle cx="560.10" cy="418.70" r="2.3" fill="#333"/><circle cx="572.15" cy="419.30" r="3.6" fill="none" stroke="#ececec" stroke-width="1"/><circle cx="572.75" cy="418.70" r="2.3" fill="#333"/><circle cx="584.80" cy="419.30" r="3.6" fill="none" stroke="#ececec" stroke-width="1"/><circle cx="585.40" cy="418.70" r="2.3" fill="#333"/><circle cx="597.45" cy="419.30" r="3.6" fill="none" stroke="#ececec" stroke-width="1"/><circle cx="598.05" cy="418.70" r="2.3" fill="#333"/><circle cx="610.10" cy="419.30" r="3.6" fill="none" stroke="#ececec" stroke-width="1"/><circle cx="610.70" cy="418.70" r="2.3" fill="#333"/><circle cx="647.70" cy="419.30" r="3.6" fill="none" stroke="#ececec" stroke-width="1"/><circle cx="648.30" cy="418.70" r="2.3" fill="#333"/><circle cx="660.35" cy="419.30" r="3.6" fill="none" stroke="#ececec" stroke-width="1"/><circle cx="660.95" cy="418.70" r="2.3" fill="#333"/><circle cx="673.00" cy="419.30" r="3.6" fill="none" stroke="#ececec" stroke-width="1"/><circle cx="673.60" cy="418.70" r="2.3" fill="#333"/><circle cx="685.65" cy="419.30" r="3.6" fill="none" stroke="#ececec" stroke-width="1"/><circle cx="686.25" cy="418.70" r="2.3" fill="#333"/><circle cx="698.30" cy="419.30" r="3.6" fill="none" stroke="#ececec" stroke-width="1"/><circle cx="698.90" cy="418.70" r="2.3" fill="#333"/><circle cx="737.0" cy="418.70" r="2.3" fill="#1f8a2a"/><circle cx="749.8" cy="418.70" r="2.3" fill="#1f8a2a"/><circle cx="509.3" cy="418.70" r="2.3" fill="#333"/><circle cx="522.2" cy="418.70" r="2.3" fill="#333"/><circle cx="559.50" cy="431.95" r="3.6" fill="none" stroke="#ececec" stroke-width="1"/><circle cx="560.10" cy="431.35" r="2.3" fill="#333"/><circle cx="572.15" cy="431.95" r="3.6" fill="none" stroke="#ececec" stroke-width="1"/><circle cx="572.75" cy="431.35" r="2.3" fill="#333"/><circle cx="584.80" cy="431.95" r="3.6" fill="none" stroke="#ececec" stroke-width="1"/><circle cx="585.40" cy="431.35" r="2.3" fill="#333"/><circle cx="597.45" cy="431.95" r="3.6" fill="none" stroke="#ececec" stroke-width="1"/><circle cx="598.05" cy="431.35" r="2.3" fill="#333"/><circle cx="610.10" cy="431.95" r="3.6" fill="none" stroke="#ececec" stroke-width="1"/><circle cx="610.70" cy="431.35" r="2.3" fill="#333"/><circle cx="647.70" cy="431.95" r="3.6" fill="none" stroke="#ececec" stroke-width="1"/><circle cx="648.30" cy="431.35" r="2.3" fill="#333"/><circle cx="660.35" cy="431.95" r="3.6" fill="none" stroke="#ececec" stroke-width="1"/><circle cx="660.95" cy="431.35" r="2.3" fill="#333"/><circle cx="673.00" cy="431.95" r="3.6" fill="none" stroke="#ececec" stroke-width="1"/><circle cx="673.60" cy="431.35" r="2.3" fill="#333"/><circle cx="685.65" cy="431.95" r="3.6" fill="none" stroke="#ececec" stroke-width="1"/><circle cx="686.25" cy="431.35" r="2.3" fill="#333"/><circle cx="698.30" cy="431.95" r="3.6" fill="none" stroke="#ececec" stroke-width="1"/><circle cx="698.90" cy="431.35" r="2.3" fill="#333"/><circle cx="737.0" cy="431.35" r="2.3" fill="#1f8a2a"/><circle cx="749.8" cy="431.35" r="2.3" fill="#1f8a2a"/><circle cx="509.3" cy="431.35" r="2.3" fill="#333"/><circle cx="522.2" cy="431.35" r="2.3" fill="#333"/><circle cx="559.50" cy="444.60" r="3.6" fill="none" stroke="#ececec" stroke-width="1"/><circle cx="560.10" cy="444.00" r="2.3" fill="#333"/><circle cx="572.15" cy="444.60" r="3.6" fill="none" stroke="#ececec" stroke-width="1"/><circle cx="572.75" cy="444.00" r="2.3" fill="#333"/><circle cx="584.80" cy="444.60" r="3.6" fill="none" stroke="#ececec" stroke-width="1"/><circle cx="585.40" cy="444.00" r="2.3" fill="#333"/><circle cx="597.45" cy="444.60" r="3.6" fill="none" stroke="#ececec" stroke-width="1"/><circle cx="598.05" cy="444.00" r="2.3" fill="#333"/><circle cx="610.10" cy="444.60" r="3.6" fill="none" stroke="#ececec" stroke-width="1"/><circle cx="610.70" cy="444.00" r="2.3" fill="#333"/><circle cx="647.70" cy="444.60" r="3.6" fill="none" stroke="#ececec" stroke-width="1"/><circle cx="648.30" cy="444.00" r="2.3" fill="#333"/><circle cx="660.35" cy="444.60" r="3.6" fill="none" stroke="#ececec" stroke-width="1"/><circle cx="660.95" cy="444.00" r="2.3" fill="#333"/><circle cx="673.00" cy="444.60" r="3.6" fill="none" stroke="#ececec" stroke-width="1"/><circle cx="673.60" cy="444.00" r="2.3" fill="#333"/><circle cx="685.65" cy="444.60" r="3.6" fill="none" stroke="#ececec" stroke-width="1"/><circle cx="686.25" cy="444.00" r="2.3" fill="#333"/><circle cx="698.30" cy="444.60" r="3.6" fill="none" stroke="#ececec" stroke-width="1"/><circle cx="698.90" cy="444.00" r="2.3" fill="#333"/><circle cx="737.0" cy="444.00" r="2.3" fill="#1f8a2a"/><circle cx="749.8" cy="444.00" r="2.3" fill="#1f8a2a"/><circle cx="509.3" cy="444.00" r="2.3" fill="#333"/><circle cx="522.2" cy="444.00" r="2.3" fill="#333"/><circle cx="559.50" cy="457.25" r="3.6" fill="none" stroke="#ececec" stroke-width="1"/><circle cx="560.10" cy="456.65" r="2.3" fill="#333"/><circle cx="572.15" cy="457.25" r="3.6" fill="none" stroke="#ececec" stroke-width="1"/><circle cx="572.75" cy="456.65" r="2.3" fill="#333"/><circle cx="584.80" cy="457.25" r="3.6" fill="none" stroke="#ececec" stroke-width="1"/><circle cx="585.40" cy="456.65" r="2.3" fill="#333"/><circle cx="597.45" cy="457.25" r="3.6" fill="none" stroke="#ececec" stroke-width="1"/><circle cx="598.05" cy="456.65" r="2.3" fill="#333"/><circle cx="610.10" cy="457.25" r="3.6" fill="none" stroke="#ececec" stroke-width="1"/><circle cx="610.70" cy="456.65" r="2.3" fill="#333"/><circle cx="647.70" cy="457.25" r="3.6" fill="none" stroke="#ececec" stroke-width="1"/><circle cx="648.30" cy="456.65" r="2.3" fill="#333"/><circle cx="660.35" cy="457.25" r="3.6" fill="none" stroke="#ececec" stroke-width="1"/><circle cx="660.95" cy="456.65" r="2.3" fill="#333"/><circle cx="673.00" cy="457.25" r="3.6" fill="none" stroke="#ececec" stroke-width="1"/><circle cx="673.60" cy="456.65" r="2.3" fill="#333"/><circle cx="685.65" cy="457.25" r="3.6" fill="none" stroke="#ececec" stroke-width="1"/><circle cx="686.25" cy="456.65" r="2.3" fill="#333"/><circle cx="698.30" cy="457.25" r="3.6" fill="none" stroke="#ececec" stroke-width="1"/><circle cx="698.90" cy="456.65" r="2.3" fill="#333"/><circle cx="559.50" cy="469.90" r="3.6" fill="none" stroke="#ececec" stroke-width="1"/><circle cx="560.10" cy="469.30" r="2.3" fill="#333"/><circle cx="572.15" cy="469.90" r="3.6" fill="none" stroke="#ececec" stroke-width="1"/><circle cx="572.75" cy="469.30" r="2.3" fill="#333"/><circle cx="584.80" cy="469.90" r="3.6" fill="none" stroke="#ececec" stroke-width="1"/><circle cx="585.40" cy="469.30" r="2.3" fill="#333"/><circle cx="597.45" cy="469.90" r="3.6" fill="none" stroke="#ececec" stroke-width="1"/><circle cx="598.05" cy="469.30" r="2.3" fill="#333"/><circle cx="610.10" cy="469.90" r="3.6" fill="none" stroke="#ececec" stroke-width="1"/><circle cx="610.70" cy="469.30" r="2.3" fill="#333"/><circle cx="647.70" cy="469.90" r="3.6" fill="none" stroke="#ececec" stroke-width="1"/><circle cx="648.30" cy="469.30" r="2.3" fill="#333"/><circle cx="660.35" cy="469.90" r="3.6" fill="none" stroke="#ececec" stroke-width="1"/><circle cx="660.95" cy="469.30" r="2.3" fill="#333"/><circle cx="673.00" cy="469.90" r="3.6" fill="none" stroke="#ececec" stroke-width="1"/><circle cx="673.60" cy="469.30" r="2.3" fill="#333"/><circle cx="685.65" cy="469.90" r="3.6" fill="none" stroke="#ececec" stroke-width="1"/><circle cx="686.25" cy="469.30" r="2.3" fill="#333"/><circle cx="698.30" cy="469.90" r="3.6" fill="none" stroke="#ececec" stroke-width="1"/><circle cx="698.90" cy="469.30" r="2.3" fill="#333"/><circle cx="737.0" cy="469.30" r="2.3" fill="#1f8a2a"/><circle cx="749.8" cy="469.30" r="2.3" fill="#1f8a2a"/><circle cx="509.3" cy="469.30" r="2.3" fill="#333"/><circle cx="522.2" cy="469.30" r="2.3" fill="#333"/><circle cx="559.50" cy="482.55" r="3.6" fill="none" stroke="#ececec" stroke-width="1"/><circle cx="560.10" cy="481.95" r="2.3" fill="#333"/><circle cx="572.15" cy="482.55" r="3.6" fill="none" stroke="#ececec" stroke-width="1"/><circle cx="572.75" cy="481.95" r="2.3" fill="#333"/><circle cx="584.80" cy="482.55" r="3.6" fill="none" stroke="#ececec" stroke-width="1"/><circle cx="585.40" cy="481.95" r="2.3" fill="#333"/><circle cx="597.45" cy="482.55" r="3.6" fill="none" stroke="#ececec" stroke-width="1"/><circle cx="598.05" cy="481.95" r="2.3" fill="#333"/><circle cx="610.10" cy="482.55" r="3.6" fill="none" stroke="#ececec" stroke-width="1"/><circle cx="610.70" cy="481.95" r="2.3" fill="#333"/><circle cx="647.70" cy="482.55" r="3.6" fill="none" stroke="#ececec" stroke-width="1"/><circle cx="648.30" cy="481.95" r="2.3" fill="#333"/><circle cx="660.35" cy="482.55" r="3.6" fill="none" stroke="#ececec" stroke-width="1"/><circle cx="660.95" cy="481.95" r="2.3" fill="#333"/><circle cx="673.00" cy="482.55" r="3.6" fill="none" stroke="#ececec" stroke-width="1"/><circle cx="673.60" cy="481.95" r="2.3" fill="#333"/><circle cx="685.65" cy="482.55" r="3.6" fill="none" stroke="#ececec" stroke-width="1"/><circle cx="686.25" cy="481.95" r="2.3" fill="#333"/><circle cx="698.30" cy="482.55" r="3.6" fill="none" stroke="#ececec" stroke-width="1"/><circle cx="698.90" cy="481.95" r="2.3" fill="#333"/><circle cx="737.0" cy="481.95" r="2.3" fill="#1f8a2a"/><circle cx="749.8" cy="481.95" r="2.3" fill="#1f8a2a"/><circle cx="509.3" cy="481.95" r="2.3" fill="#333"/><circle cx="522.2" cy="481.95" r="2.3" fill="#333"/><circle cx="559.50" cy="495.20" r="3.6" fill="none" stroke="#ececec" stroke-width="1"/><circle cx="560.10" cy="494.60" r="2.3" fill="#333"/><circle cx="572.15" cy="495.20" r="3.6" fill="none" stroke="#ececec" stroke-width="1"/><circle cx="572.75" cy="494.60" r="2.3" fill="#333"/><circle cx="584.80" cy="495.20" r="3.6" fill="none" stroke="#ececec" stroke-width="1"/><circle cx="585.40" cy="494.60" r="2.3" fill="#333"/><circle cx="597.45" cy="495.20" r="3.6" fill="none" stroke="#ececec" stroke-width="1"/><circle cx="598.05" cy="494.60" r="2.3" fill="#333"/><circle cx="610.10" cy="495.20" r="3.6" fill="none" stroke="#ececec" stroke-width="1"/><circle cx="610.70" cy="494.60" r="2.3" fill="#333"/><circle cx="647.70" cy="495.20" r="3.6" fill="none" stroke="#ececec" stroke-width="1"/><circle cx="648.30" cy="494.60" r="2.3" fill="#333"/><circle cx="660.35" cy="495.20" r="3.6" fill="none" stroke="#ececec" stroke-width="1"/><circle cx="660.95" cy="494.60" r="2.3" fill="#333"/><circle cx="673.00" cy="495.20" r="3.6" fill="none" stroke="#ececec" stroke-width="1"/><circle cx="673.60" cy="494.60" r="2.3" fill="#333"/><circle cx="685.65" cy="495.20" r="3.6" fill="none" stroke="#ececec" stroke-width="1"/><circle cx="686.25" cy="494.60" r="2.3" fill="#333"/><circle cx="698.30" cy="495.20" r="3.6" fill="none" stroke="#ececec" stroke-width="1"/><circle cx="698.90" cy="494.60" r="2.3" fill="#333"/><circle cx="737.0" cy="494.60" r="2.3" fill="#1f8a2a"/><circle cx="749.8" cy="494.60" r="2.3" fill="#1f8a2a"/><circle cx="509.3" cy="494.60" r="2.3" fill="#333"/><circle cx="522.2" cy="494.60" r="2.3" fill="#333"/><circle cx="559.50" cy="507.85" r="3.6" fill="none" stroke="#ececec" stroke-width="1"/><circle cx="560.10" cy="507.25" r="2.3" fill="#333"/><circle cx="572.15" cy="507.85" r="3.6" fill="none" stroke="#ececec" stroke-width="1"/><circle cx="572.75" cy="507.25" r="2.3" fill="#333"/><circle cx="584.80" cy="507.85" r="3.6" fill="none" stroke="#ececec" stroke-width="1"/><circle cx="585.40" cy="507.25" r="2.3" fill="#333"/><circle cx="597.45" cy="507.85" r="3.6" fill="none" stroke="#ececec" stroke-width="1"/><circle cx="598.05" cy="507.25" r="2.3" fill="#333"/><circle cx="610.10" cy="507.85" r="3.6" fill="none" stroke="#ececec" stroke-width="1"/><circle cx="610.70" cy="507.25" r="2.3" fill="#333"/><circle cx="647.70" cy="507.85" r="3.6" fill="none" stroke="#ececec" stroke-width="1"/><circle cx="648.30" cy="507.25" r="2.3" fill="#333"/><circle cx="660.35" cy="507.85" r="3.6" fill="none" stroke="#ececec" stroke-width="1"/><circle cx="660.95" cy="507.25" r="2.3" fill="#333"/><circle cx="673.00" cy="507.85" r="3.6" fill="none" stroke="#ececec" stroke-width="1"/><circle cx="673.60" cy="507.25" r="2.3" fill="#333"/><circle cx="685.65" cy="507.85" r="3.6" fill="none" stroke="#ececec" stroke-width="1"/><circle cx="686.25" cy="507.25" r="2.3" fill="#333"/><circle cx="698.30" cy="507.85" r="3.6" fill="none" stroke="#ececec" stroke-width="1"/><circle cx="698.90" cy="507.25" r="2.3" fill="#333"/><circle cx="737.0" cy="507.25" r="2.3" fill="#1f8a2a"/><circle cx="749.8" cy="507.25" r="2.3" fill="#1f8a2a"/><circle cx="509.3" cy="507.25" r="2.3" fill="#333"/><circle cx="522.2" cy="507.25" r="2.3" fill="#333"/><circle cx="559.50" cy="520.50" r="3.6" fill="none" stroke="#ececec" stroke-width="1"/><circle cx="560.10" cy="519.90" r="2.3" fill="#333"/><circle cx="572.15" cy="520.50" r="3.6" fill="none" stroke="#ececec" stroke-width="1"/><circle cx="572.75" cy="519.90" r="2.3" fill="#333"/><circle cx="584.80" cy="520.50" r="3.6" fill="none" stroke="#ececec" stroke-width="1"/><circle cx="585.40" cy="519.90" r="2.3" fill="#333"/><circle cx="597.45" cy="520.50" r="3.6" fill="none" stroke="#ececec" stroke-width="1"/><circle cx="598.05" cy="519.90" r="2.3" fill="#333"/><circle cx="610.10" cy="520.50" r="3.6" fill="none" stroke="#ececec" stroke-width="1"/><circle cx="610.70" cy="519.90" r="2.3" fill="#333"/><circle cx="647.70" cy="520.50" r="3.6" fill="none" stroke="#ececec" stroke-width="1"/><circle cx="648.30" cy="519.90" r="2.3" fill="#333"/><circle cx="660.35" cy="520.50" r="3.6" fill="none" stroke="#ececec" stroke-width="1"/><circle cx="660.95" cy="519.90" r="2.3" fill="#333"/><circle cx="673.00" cy="520.50" r="3.6" fill="none" stroke="#ececec" stroke-width="1"/><circle cx="673.60" cy="519.90" r="2.3" fill="#333"/><circle cx="685.65" cy="520.50" r="3.6" fill="none" stroke="#ececec" stroke-width="1"/><circle cx="686.25" cy="519.90" r="2.3" fill="#333"/><circle cx="698.30" cy="520.50" r="3.6" fill="none" stroke="#ececec" stroke-width="1"/><circle cx="698.90" cy="519.90" r="2.3" fill="#333"/><circle cx="737.0" cy="519.90" r="2.3" fill="#1f8a2a"/><circle cx="749.8" cy="519.90" r="2.3" fill="#1f8a2a"/><circle cx="509.3" cy="519.90" r="2.3" fill="#333"/><circle cx="522.2" cy="519.90" r="2.3" fill="#333"/><circle cx="559.50" cy="533.15" r="3.6" fill="none" stroke="#ececec" stroke-width="1"/><circle cx="560.10" cy="532.55" r="2.3" fill="#333"/><circle cx="572.15" cy="533.15" r="3.6" fill="none" stroke="#ececec" stroke-width="1"/><circle cx="572.75" cy="532.55" r="2.3" fill="#333"/><circle cx="584.80" cy="533.15" r="3.6" fill="none" stroke="#ececec" stroke-width="1"/><circle cx="585.40" cy="532.55" r="2.3" fill="#333"/><circle cx="597.45" cy="533.15" r="3.6" fill="none" stroke="#ececec" stroke-width="1"/><circle cx="598.05" cy="532.55" r="2.3" fill="#333"/><circle cx="610.10" cy="533.15" r="3.6" fill="none" stroke="#ececec" stroke-width="1"/><circle cx="610.70" cy="532.55" r="2.3" fill="#333"/><circle cx="647.70" cy="533.15" r="3.6" fill="none" stroke="#ececec" stroke-width="1"/><circle cx="648.30" cy="532.55" r="2.3" fill="#333"/><circle cx="660.35" cy="533.15" r="3.6" fill="none" stroke="#ececec" stroke-width="1"/><circle cx="660.95" cy="532.55" r="2.3" fill="#333"/><circle cx="673.00" cy="533.15" r="3.6" fill="none" stroke="#ececec" stroke-width="1"/><circle cx="673.60" cy="532.55" r="2.3" fill="#333"/><circle cx="685.65" cy="533.15" r="3.6" fill="none" stroke="#ececec" stroke-width="1"/><circle cx="686.25" cy="532.55" r="2.3" fill="#333"/><circle cx="698.30" cy="533.15" r="3.6" fill="none" stroke="#ececec" stroke-width="1"/><circle cx="698.90" cy="532.55" r="2.3" fill="#333"/><circle cx="559.50" cy="545.80" r="3.6" fill="none" stroke="#ececec" stroke-width="1"/><circle cx="560.10" cy="545.20" r="2.3" fill="#333"/><circle cx="572.15" cy="545.80" r="3.6" fill="none" stroke="#ececec" stroke-width="1"/><circle cx="572.75" cy="545.20" r="2.3" fill="#333"/><circle cx="584.80" cy="545.80" r="3.6" fill="none" stroke="#ececec" stroke-width="1"/><circle cx="585.40" cy="545.20" r="2.3" fill="#333"/><circle cx="597.45" cy="545.80" r="3.6" fill="none" stroke="#ececec" stroke-width="1"/><circle cx="598.05" cy="545.20" r="2.3" fill="#333"/><circle cx="610.10" cy="545.80" r="3.6" fill="none" stroke="#ececec" stroke-width="1"/><circle cx="610.70" cy="545.20" r="2.3" fill="#333"/><circle cx="647.70" cy="545.80" r="3.6" fill="none" stroke="#ececec" stroke-width="1"/><circle cx="648.30" cy="545.20" r="2.3" fill="#333"/><circle cx="660.35" cy="545.80" r="3.6" fill="none" stroke="#ececec" stroke-width="1"/><circle cx="660.95" cy="545.20" r="2.3" fill="#333"/><circle cx="673.00" cy="545.80" r="3.6" fill="none" stroke="#ececec" stroke-width="1"/><circle cx="673.60" cy="545.20" r="2.3" fill="#333"/><circle cx="685.65" cy="545.80" r="3.6" fill="none" stroke="#ececec" stroke-width="1"/><circle cx="686.25" cy="545.20" r="2.3" fill="#333"/><circle cx="698.30" cy="545.80" r="3.6" fill="none" stroke="#ececec" stroke-width="1"/><circle cx="698.90" cy="545.20" r="2.3" fill="#333"/><circle cx="737.0" cy="545.20" r="2.3" fill="#1f8a2a"/><circle cx="749.8" cy="545.20" r="2.3" fill="#1f8a2a"/><circle cx="509.3" cy="545.20" r="2.3" fill="#333"/><circle cx="522.2" cy="545.20" r="2.3" fill="#333"/><circle cx="559.50" cy="558.45" r="3.6" fill="none" stroke="#ececec" stroke-width="1"/><circle cx="560.10" cy="557.85" r="2.3" fill="#333"/><circle cx="572.15" cy="558.45" r="3.6" fill="none" stroke="#ececec" stroke-width="1"/><circle cx="572.75" cy="557.85" r="2.3" fill="#333"/><circle cx="584.80" cy="558.45" r="3.6" fill="none" stroke="#ececec" stroke-width="1"/><circle cx="585.40" cy="557.85" r="2.3" fill="#333"/><circle cx="597.45" cy="558.45" r="3.6" fill="none" stroke="#ececec" stroke-width="1"/><circle cx="598.05" cy="557.85" r="2.3" fill="#333"/><circle cx="610.10" cy="558.45" r="3.6" fill="none" stroke="#ececec" stroke-width="1"/><circle cx="610.70" cy="557.85" r="2.3" fill="#333"/><circle cx="647.70" cy="558.45" r="3.6" fill="none" stroke="#ececec" stroke-width="1"/><circle cx="648.30" cy="557.85" r="2.3" fill="#333"/><circle cx="660.35" cy="558.45" r="3.6" fill="none" stroke="#ececec" stroke-width="1"/><circle cx="660.95" cy="557.85" r="2.3" fill="#333"/><circle cx="673.00" cy="558.45" r="3.6" fill="none" stroke="#ececec" stroke-width="1"/><circle cx="673.60" cy="557.85" r="2.3" fill="#333"/><circle cx="685.65" cy="558.45" r="3.6" fill="none" stroke="#ececec" stroke-width="1"/><circle cx="686.25" cy="557.85" r="2.3" fill="#333"/><circle cx="698.30" cy="558.45" r="3.6" fill="none" stroke="#ececec" stroke-width="1"/><circle cx="698.90" cy="557.85" r="2.3" fill="#333"/><circle cx="737.0" cy="557.85" r="2.3" fill="#1f8a2a"/><circle cx="749.8" cy="557.85" r="2.3" fill="#1f8a2a"/><circle cx="509.3" cy="557.85" r="2.3" fill="#333"/><circle cx="522.2" cy="557.85" r="2.3" fill="#333"/><circle cx="559.50" cy="571.10" r="3.6" fill="none" stroke="#ececec" stroke-width="1"/><circle cx="560.10" cy="570.50" r="2.3" fill="#333"/><circle cx="572.15" cy="571.10" r="3.6" fill="none" stroke="#ececec" stroke-width="1"/><circle cx="572.75" cy="570.50" r="2.3" fill="#333"/><circle cx="584.80" cy="571.10" r="3.6" fill="none" stroke="#ececec" stroke-width="1"/><circle cx="585.40" cy="570.50" r="2.3" fill="#333"/><circle cx="597.45" cy="571.10" r="3.6" fill="none" stroke="#ececec" stroke-width="1"/><circle cx="598.05" cy="570.50" r="2.3" fill="#333"/><circle cx="610.10" cy="571.10" r="3.6" fill="none" stroke="#ececec" stroke-width="1"/><circle cx="610.70" cy="570.50" r="2.3" fill="#333"/><circle cx="647.70" cy="571.10" r="3.6" fill="none" stroke="#ececec" stroke-width="1"/><circle cx="648.30" cy="570.50" r="2.3" fill="#333"/><circle cx="660.35" cy="571.10" r="3.6" fill="none" stroke="#ececec" stroke-width="1"/><circle cx="660.95" cy="570.50" r="2.3" fill="#333"/><circle cx="673.00" cy="571.10" r="3.6" fill="none" stroke="#ececec" stroke-width="1"/><circle cx="673.60" cy="570.50" r="2.3" fill="#333"/><circle cx="685.65" cy="571.10" r="3.6" fill="none" stroke="#ececec" stroke-width="1"/><circle cx="686.25" cy="570.50" r="2.3" fill="#333"/><circle cx="698.30" cy="571.10" r="3.6" fill="none" stroke="#ececec" stroke-width="1"/><circle cx="698.90" cy="570.50" r="2.3" fill="#333"/><circle cx="737.0" cy="570.50" r="2.3" fill="#1f8a2a"/><circle cx="749.8" cy="570.50" r="2.3" fill="#1f8a2a"/><circle cx="509.3" cy="570.50" r="2.3" fill="#333"/><circle cx="522.2" cy="570.50" r="2.3" fill="#333"/><circle cx="559.50" cy="583.75" r="3.6" fill="none" stroke="#ececec" stroke-width="1"/><circle cx="560.10" cy="583.15" r="2.3" fill="#333"/><circle cx="572.15" cy="583.75" r="3.6" fill="none" stroke="#ececec" stroke-width="1"/><circle cx="572.75" cy="583.15" r="2.3" fill="#333"/><circle cx="584.80" cy="583.75" r="3.6" fill="none" stroke="#ececec" stroke-width="1"/><circle cx="585.40" cy="583.15" r="2.3" fill="#333"/><circle cx="597.45" cy="583.75" r="3.6" fill="none" stroke="#ececec" stroke-width="1"/><circle cx="598.05" cy="583.15" r="2.3" fill="#333"/><circle cx="610.10" cy="583.75" r="3.6" fill="none" stroke="#ececec" stroke-width="1"/><circle cx="610.70" cy="583.15" r="2.3" fill="#333"/><circle cx="647.70" cy="583.75" r="3.6" fill="none" stroke="#ececec" stroke-width="1"/><circle cx="648.30" cy="583.15" r="2.3" fill="#333"/><circle cx="660.35" cy="583.75" r="3.6" fill="none" stroke="#ececec" stroke-width="1"/><circle cx="660.95" cy="583.15" r="2.3" fill="#333"/><circle cx="673.00" cy="583.75" r="3.6" fill="none" stroke="#ececec" stroke-width="1"/><circle cx="673.60" cy="583.15" r="2.3" fill="#333"/><circle cx="685.65" cy="583.75" r="3.6" fill="none" stroke="#ececec" stroke-width="1"/><circle cx="686.25" cy="583.15" r="2.3" fill="#333"/><circle cx="698.30" cy="583.75" r="3.6" fill="none" stroke="#ececec" stroke-width="1"/><circle cx="698.90" cy="583.15" r="2.3" fill="#333"/><circle cx="737.0" cy="583.15" r="2.3" fill="#1f8a2a"/><circle cx="749.8" cy="583.15" r="2.3" fill="#1f8a2a"/><circle cx="509.3" cy="583.15" r="2.3" fill="#333"/><circle cx="522.2" cy="583.15" r="2.3" fill="#333"/><circle cx="559.50" cy="596.40" r="3.6" fill="none" stroke="#ececec" stroke-width="1"/><circle cx="560.10" cy="595.80" r="2.3" fill="#333"/><circle cx="572.15" cy="596.40" r="3.6" fill="none" stroke="#ececec" stroke-width="1"/><circle cx="572.75" cy="595.80" r="2.3" fill="#333"/><circle cx="584.80" cy="596.40" r="3.6" fill="none" stroke="#ececec" stroke-width="1"/><circle cx="585.40" cy="595.80" r="2.3" fill="#333"/><circle cx="597.45" cy="596.40" r="3.6" fill="none" stroke="#ececec" stroke-width="1"/><circle cx="598.05" cy="595.80" r="2.3" fill="#333"/><circle cx="610.10" cy="596.40" r="3.6" fill="none" stroke="#ececec" stroke-width="1"/><circle cx="610.70" cy="595.80" r="2.3" fill="#333"/><circle cx="647.70" cy="596.40" r="3.6" fill="none" stroke="#ececec" stroke-width="1"/><circle cx="648.30" cy="595.80" r="2.3" fill="#333"/><circle cx="660.35" cy="596.40" r="3.6" fill="none" stroke="#ececec" stroke-width="1"/><circle cx="660.95" cy="595.80" r="2.3" fill="#333"/><circle cx="673.00" cy="596.40" r="3.6" fill="none" stroke="#ececec" stroke-width="1"/><circle cx="673.60" cy="595.80" r="2.3" fill="#333"/><circle cx="685.65" cy="596.40" r="3.6" fill="none" stroke="#ececec" stroke-width="1"/><circle cx="686.25" cy="595.80" r="2.3" fill="#333"/><circle cx="698.30" cy="596.40" r="3.6" fill="none" stroke="#ececec" stroke-width="1"/><circle cx="698.90" cy="595.80" r="2.3" fill="#333"/><circle cx="737.0" cy="595.80" r="2.3" fill="#1f8a2a"/><circle cx="749.8" cy="595.80" r="2.3" fill="#1f8a2a"/><circle cx="509.3" cy="595.80" r="2.3" fill="#333"/><circle cx="522.2" cy="595.80" r="2.3" fill="#333"/></g>
<g font-family="Liberation Sans" font-size="8" fill="#bdbdbd">
<text x="560.1" y="131" text-anchor="middle">A</text>
<text x="572.8" y="131" text-anchor="middle">B</text>
<text x="585.4" y="131" text-anchor="middle">C</text>
<text x="598.0" y="131" text-anchor="middle">D</text>
<text x="610.7" y="131" text-anchor="middle">E</text>
<text x="648.3" y="131" text-anchor="middle">F</text>
<text x="661.0" y="131" text-anchor="middle">G</text>
<text x="673.6" y="131" text-anchor="middle">H</text>
<text x="686.2" y="131" text-anchor="middle">I</text>
<text x="698.9" y="131" text-anchor="middle">J</text>
<text x="711" y="143.4">1</text>
<text x="538" y="143.4">1</text>
<text x="711" y="194.0">5</text>
<text x="538" y="194.0">5</text>
<text x="711" y="257.2">10</text>
<text x="538" y="257.2">10</text>
<text x="711" y="320.5">15</text>
<text x="538" y="320.5">15</text>
<text x="711" y="383.8">20</text>
<text x="538" y="383.8">20</text>
<text x="711" y="447.0">25</text>
<text x="538" y="447.0">25</text>
<text x="711" y="510.2">30</text>
<text x="538" y="510.2">30</text>
<text x="711" y="573.5">35</text>
<text x="538" y="573.5">35</text>
</g>
<rect x="386.7" y="119" width="179.3" height="398" fill="#228a3a"/>
<circle cx="398.3" cy="130.3" r="8.3" fill="#b0a288"/><circle cx="398.3" cy="130.3" r="5.2" fill="#fff"/>
<circle cx="554.2" cy="130.3" r="8.3" fill="#b0a288"/><circle cx="554.2" cy="130.3" r="5.2" fill="#fff"/>
<circle cx="398.3" cy="506" r="8.3" fill="#b0a288"/><circle cx="398.3" cy="506" r="5.2" fill="#fff"/>
<circle cx="554.2" cy="506" r="8.3" fill="#b0a288"/><circle cx="554.2" cy="506" r="5.2" fill="#fff"/>
<path d="M410.5 138 L415 135 L452 135 L455 138 L500 138 L503 135 L537 135 L541.7 138 L541.7 497 L537 500.5 L503 500.5 L500 497.5 L455 497.5 L452 500.5 L415 500.5 L410.5 497 Z" fill="#333234"/>
<rect x="417.5" y="148" width="6" height="340" rx="1" fill="#1c1c1c"/>
<rect x="420.5" y="150" width="2" height="336" fill="#3e3e3e"/>
<rect x="529" y="148" width="6" height="340" rx="1" fill="#1c1c1c"/>
<rect x="531" y="150" width="2" height="336" fill="#3e3e3e"/>
<rect x="408" y="165.5" width="3" height="30" fill="#f0f0f0"/><rect x="542.5" y="165.5" width="3" height="30" fill="#f0f0f0"/>
<rect x="408" y="304" width="2.5" height="29" fill="#f0f0f0"/><rect x="542.5" y="304" width="2.5" height="29" fill="#f0f0f0"/>
<rect x="408" y="441" width="3" height="30" fill="#f0f0f0"/><rect x="542.5" y="441" width="3" height="30" fill="#f0f0f0"/>
<rect x="434" y="151" width="85" height="334.5" rx="7" fill="#89b52d"/>
<rect x="446.4" y="168" width="58.6" height="300" fill="#7da42b"/>
<g stroke="#8fb43c" stroke-width="1"><line x1="476" y1="168" x2="476" y2="468"/><line x1="446.4" y1="186.8" x2="505" y2="186.8"/><line x1="446.4" y1="205.5" x2="505" y2="205.5"/><line x1="446.4" y1="224.2" x2="505" y2="224.2"/><line x1="446.4" y1="243.0" x2="505" y2="243.0"/><line x1="446.4" y1="261.8" x2="505" y2="261.8"/><line x1="446.4" y1="280.5" x2="505" y2="280.5"/><line x1="446.4" y1="299.2" x2="505" y2="299.2"/><line x1="446.4" y1="318.0" x2="505" y2="318.0"/><line x1="446.4" y1="336.8" x2="505" y2="336.8"/><line x1="446.4" y1="355.5" x2="505" y2="355.5"/><line x1="446.4" y1="374.2" x2="505" y2="374.2"/><line x1="446.4" y1="393.0" x2="505" y2="393.0"/><line x1="446.4" y1="411.8" x2="505" y2="411.8"/><line x1="446.4" y1="430.5" x2="505" y2="430.5"/><line x1="446.4" y1="449.2" x2="505" y2="449.2"/></g>
<ellipse cx="559" cy="153.00" rx="5.8" ry="4.8" fill="#bfa48c"/><circle cx="559.4" cy="153.00" r="2.7" fill="#6e0c0a"/>
<ellipse cx="559" cy="165.65" rx="5.8" ry="4.8" fill="#bfa48c"/><circle cx="559.4" cy="165.65" r="2.7" fill="#6e0c0a"/>
<ellipse cx="559" cy="178.30" rx="5.8" ry="4.8" fill="#bfa48c"/><circle cx="559.4" cy="178.30" r="2.7" fill="#6e0c0a"/>
<ellipse cx="559" cy="190.95" rx="5.8" ry="4.8" fill="#bfa48c"/><circle cx="559.4" cy="190.95" r="2.7" fill="#6e0c0a"/>
<ellipse cx="559" cy="203.60" rx="5.8" ry="4.8" fill="#bfa48c"/><circle cx="559.4" cy="203.60" r="2.7" fill="#6e0c0a"/>
<ellipse cx="559" cy="216.25" rx="5.8" ry="4.8" fill="#bfa48c"/><circle cx="559.4" cy="216.25" r="2.7" fill="#6e0c0a"/>
<ellipse cx="559" cy="228.90" rx="5.8" ry="4.8" fill="#bfa48c"/><circle cx="559.4" cy="228.90" r="2.7" fill="#6e0c0a"/>
<ellipse cx="559" cy="241.55" rx="5.8" ry="4.8" fill="#bfa48c"/><circle cx="559.4" cy="241.55" r="2.7" fill="#6e0c0a"/>
<ellipse cx="559" cy="254.20" rx="5.8" ry="4.8" fill="#bfa48c"/><circle cx="559.4" cy="254.20" r="2.7" fill="#6e0c0a"/>
<ellipse cx="559" cy="266.85" rx="5.8" ry="4.8" fill="#bfa48c"/><circle cx="559.4" cy="266.85" r="2.7" fill="#6e0c0a"/>
<ellipse cx="559" cy="279.50" rx="5.8" ry="4.8" fill="#bfa48c"/><circle cx="559.4" cy="279.50" r="2.7" fill="#6e0c0a"/>
<ellipse cx="559" cy="292.15" rx="5.8" ry="4.8" fill="#bfa48c"/><circle cx="559.4" cy="292.15" r="2.7" fill="#6e0c0a"/>
<ellipse cx="559" cy="304.80" rx="5.8" ry="4.8" fill="#bfa48c"/><circle cx="559.4" cy="304.80" r="2.7" fill="#6e0c0a"/>
<ellipse cx="559" cy="317.45" rx="5.8" ry="4.8" fill="#bfa48c"/><circle cx="559.4" cy="317.45" r="2.7" fill="#6e0c0a"/>
<ellipse cx="559" cy="330.10" rx="5.8" ry="4.8" fill="#bfa48c"/><circle cx="559.4" cy="330.10" r="2.7" fill="#6e0c0a"/>
<ellipse cx="559" cy="342.75" rx="5.8" ry="4.8" fill="#bfa48c"/><circle cx="559.4" cy="342.75" r="2.7" fill="#6e0c0a"/>
<rect x="614.4" y="193" width="65" height="46.4" rx="3" fill="#c4c4c4" stroke="#a8a8a8" stroke-width="0.8"/>
<rect x="618" y="196" width="54" height="40" fill="#cbcbcb"/>
<path d="M672.5 194 L679 194 Q683.5 194 683.5 198.5 L683.5 234 Q683.5 239 679 239 L672.5 239 Z" fill="#101010"/>
<path d="M584 205 L648 205 Q656 205 656 213 L656 220 Q656 227.6 648 227.6 L598 227.6 L584 213 Z" fill="#0e0e0e"/>
<circle cx="620" cy="198.5" r="3" fill="#111"/>
<circle cx="668" cy="198.5" r="3" fill="#111"/>
<circle cx="620" cy="234" r="3" fill="#111"/>
<circle cx="668" cy="234" r="3" fill="#111"/>
<path d="M775 597 L775 576 Q775 571 780 571 L1035 571 Q1040 571 1040 576 L1040 640 L775 640 Z" fill="#1b7a95"/>
<rect x="791.6" y="562.7" width="44.4" height="80" fill="#1e1e1e"/>
<rect x="795" y="566" width="36" height="80" fill="#2a2a2a"/>
<rect x="855" y="595" width="16" height="10" fill="#a0a0a0"/>
<rect x="929" y="571" width="7" height="7" fill="#b8b8b8"/><rect x="993" y="571" width="7" height="7" fill="#b8b8b8"/>
<rect x="935.8" y="540" width="57.4" height="70" fill="#b4b4b4"/>
<rect x="935.8" y="540" width="57.4" height="11" fill="#9a9a9a"/>
<rect x="1006" y="580" width="29" height="30" fill="#d8d8d8"/>
<circle cx="1020" cy="598" r="6" fill="#b02020"/>
<line x1="686" y1="330.2" x2="737" y2="330.2" stroke="#9aa59a" stroke-width="2"/>
<rect x="695" y="325" width="32" height="10" rx="3" fill="#e8c48a"/>
<rect x="700" y="325" width="2.6" height="10" fill="#c0281a"/>
<rect x="705.5" y="325" width="2.6" height="10" fill="#c0281a"/>
<rect x="711" y="325" width="2.6" height="10" fill="#8a3a10"/>
<rect x="720" y="325" width="2.6" height="10" fill="#c9a040"/>
<line x1="558" y1="153" x2="750" y2="165.6" stroke="#29609a" stroke-width="6.1" stroke-linecap="round"/>
<line x1="558" y1="153" x2="750" y2="165.6" stroke="#3a86d6" stroke-width="4.7" stroke-linecap="round"/>
<circle cx="558" cy="153" r="2.75" fill="#2c6cc0"/>
<circle cx="750" cy="165.6" r="2.5" fill="#3aa0b0"/>
<line x1="558" y1="165.5" x2="737" y2="178.3" stroke="#29609a" stroke-width="6.1" stroke-linecap="round"/>
<line x1="558" y1="165.5" x2="737" y2="178.3" stroke="#3a86d6" stroke-width="4.7" stroke-linecap="round"/>
<circle cx="558" cy="165.5" r="2.75" fill="#3ab0c0"/>
<circle cx="737" cy="178.3" r="2.5" fill="#3aa0b0"/>
<line x1="558" y1="178.3" x2="699" y2="216.3" stroke="#980e0e" stroke-width="6.1" stroke-linecap="round"/>
<line x1="558" y1="178.3" x2="699" y2="216.3" stroke="#d41414" stroke-width="4.7" stroke-linecap="round"/>
<circle cx="558" cy="178.3" r="2.75" fill="#8a4a10"/>
<circle cx="699" cy="216.3" r="2.5" fill="#8a4a10"/>
<line x1="699" y1="203.6" x2="750" y2="203.6" stroke="#980e0e" stroke-width="6.1" stroke-linecap="round"/>
<line x1="699" y1="203.6" x2="750" y2="203.6" stroke="#d41414" stroke-width="4.7" stroke-linecap="round"/>
<circle cx="699" cy="203.6" r="2.75" fill="#8a4a10"/>
<circle cx="750" cy="203.6" r="2.5" fill="#8a4a10"/>
<line x1="699.5" y1="228.5" x2="737" y2="216.3" stroke="#980e0e" stroke-width="6.1" stroke-linecap="round"/>
<line x1="699.5" y1="228.5" x2="737" y2="216.3" stroke="#d41414" stroke-width="4.7" stroke-linecap="round"/>
<circle cx="737" cy="216.3" r="2.5" fill="#8a4a10"/>
<line x1="558" y1="203.7" x2="750" y2="241.6" stroke="#189522" stroke-width="6.1" stroke-linecap="round"/>
<line x1="558" y1="203.7" x2="750" y2="241.6" stroke="#22d030" stroke-width="4.7" stroke-linecap="round"/>
<circle cx="558" cy="203.7" r="2.75" fill="#30b040"/>
<circle cx="750" cy="241.6" r="2.5" fill="#30b040"/>
<line x1="558" y1="343" x2="750" y2="343" stroke="#29609a" stroke-width="6.1" stroke-linecap="round"/>
<line x1="558" y1="343" x2="750" y2="343" stroke="#3a86d6" stroke-width="4.7" stroke-linecap="round"/>
<circle cx="558" cy="343" r="2.75" fill="#3aa0b0"/>
<circle cx="750" cy="343" r="2.5" fill="#3aa0b0"/>
<line x1="610.7" y1="330.2" x2="661" y2="330.2" stroke="#154c19" stroke-width="6.0" stroke-linecap="round"/>
<line x1="610.7" y1="330.2" x2="661" y2="330.2" stroke="#1e6a24" stroke-width="4.6" stroke-linecap="round"/>
<circle cx="610.7" cy="330.2" r="2.6999999999999997" fill="#155018"/>
<line x1="558" y1="191" x2="951.168" y2="640" stroke="#d6c800" stroke-width="6.1" stroke-linecap="round"/>
<line x1="558" y1="191" x2="951.168" y2="640" stroke="#f8ea00" stroke-width="4.7" stroke-linecap="round"/>
<circle cx="558" cy="191" r="2.75" fill="#c8c040"/>
<line x1="558" y1="216.3" x2="936.399" y2="640" stroke="#d6c800" stroke-width="6.1" stroke-linecap="round"/>
<line x1="558" y1="216.3" x2="936.399" y2="640" stroke="#f8ea00" stroke-width="4.7" stroke-linecap="round"/>
<circle cx="558" cy="216.3" r="2.75" fill="#c8c040"/>
<line x1="610.7" y1="317.5" x2="855.766" y2="640" stroke="#808080" stroke-width="5.199999999999999" stroke-linecap="round"/>
<line x1="610.7" y1="317.5" x2="855.766" y2="640" stroke="#ffffff" stroke-width="3.8" stroke-linecap="round"/>
<circle cx="610.7" cy="317.5" r="2.3" fill="#f08080"/>
<line x1="610.7" y1="304.6" x2="868.067" y2="640" stroke="#1e1e1e" stroke-width="6.1" stroke-linecap="round"/>
<line x1="610.7" y1="304.6" x2="868.067" y2="640" stroke="#2b2b2b" stroke-width="4.7" stroke-linecap="round"/>
<circle cx="610.7" cy="304.6" r="2.75" fill="#1e5a22"/>
<line x1="610.7" y1="292" x2="875.852" y2="640" stroke="#29609a" stroke-width="6.1" stroke-linecap="round"/>
<line x1="610.7" y1="292" x2="875.852" y2="640" stroke="#3a86d6" stroke-width="4.7" stroke-linecap="round"/>
<circle cx="610.7" cy="292" r="2.75" fill="#9a5aa0"/>
<line x1="610.7" y1="279.8" x2="886.724" y2="640" stroke="#980e0e" stroke-width="6.1" stroke-linecap="round"/>
<line x1="610.7" y1="279.8" x2="886.724" y2="640" stroke="#d41414" stroke-width="4.7" stroke-linecap="round"/>
<circle cx="610.7" cy="279.8" r="2.75" fill="#8a4a10"/>
<rect x="930" y="431.7" width="89" height="88.4" fill="#d52b1e"/>
<circle cx="939.4" cy="444.4" r="5.4" fill="#c24a3c" stroke="#f2a898" stroke-width="1.7"/>
<circle cx="939.4" cy="444.4" r="3.2" fill="#c87060"/><circle cx="939.4" cy="444.4" r="1.6" fill="#eab0a8"/>
<circle cx="939.4" cy="456.9" r="5.4" fill="#c24a3c" stroke="#f2a898" stroke-width="1.7"/>
<circle cx="939.4" cy="456.9" r="3.2" fill="#c87060"/><circle cx="939.4" cy="456.9" r="1.6" fill="#eab0a8"/>
<circle cx="939.4" cy="469.4" r="5.4" fill="#c24a3c" stroke="#f2a898" stroke-width="1.7"/>
<circle cx="939.4" cy="469.4" r="3.2" fill="#c87060"/><circle cx="939.4" cy="469.4" r="1.6" fill="#eab0a8"/>
<circle cx="939.4" cy="482.0" r="5.4" fill="#c24a3c" stroke="#f2a898" stroke-width="1.7"/>
<circle cx="939.4" cy="482.0" r="3.2" fill="#c87060"/><circle cx="939.4" cy="482.0" r="1.6" fill="#eab0a8"/>
<circle cx="939.4" cy="494.5" r="5.4" fill="#c24a3c" stroke="#f2a898" stroke-width="1.7"/>
<circle cx="939.4" cy="494.5" r="3.2" fill="#6a8a50"/><circle cx="939.4" cy="494.5" r="1.6" fill="#eab0a8"/>
<circle cx="939.4" cy="507.0" r="5.4" fill="#c24a3c" stroke="#f2a898" stroke-width="1.7"/>
<circle cx="939.4" cy="507.0" r="3.2" fill="#6a8a50"/><circle cx="939.4" cy="507.0" r="1.6" fill="#eab0a8"/>
<g font-family="Liberation Mono" font-size="6" fill="#f8c8b8">
<text x="947" y="446.6">ST</text>
<text x="947" y="459.1">Z</text>
<text x="947" y="471.6">Y</text>
<text x="947" y="484.2">X</text>
<text x="947" y="496.7">GND</text>
<text x="947" y="509.2">VCC</text>
<text x="969" y="442.5" font-size="7" letter-spacing="0.3">ADXL335</text>
</g>
<rect x="963.75" y="465.3" width="20.5" height="20.8" fill="#2c2c2c"/>
<circle cx="974" cy="456" r="1" fill="#fff"/>
<circle cx="956" cy="470" r="1" fill="#fff"/>
<circle cx="956" cy="482" r="1" fill="#fff"/>
<circle cx="980" cy="494" r="1" fill="#fff"/>
<g stroke="#fbd0c0" stroke-width="1.2" fill="none"><path d="M1004 503 V478 M1000.5 482 L1004 477 L1007.5 482"/><path d="M999 508 H976 M980 504.5 L975.5 508 L980 511.5"/><circle cx="1004" cy="508" r="4.2"/></g>
<circle cx="1004" cy="508" r="1.6" fill="#fbd0c0"/>
<g font-family="Liberation Sans" font-size="9" fill="#fbd0c0"><text x="1009" y="492">X</text><text x="983" y="519">Y</text><text x="1009" y="517">Z</text></g>
<line x1="939.4" y1="494.4" x2="874.5" y2="620" stroke="#783d8a" stroke-width="6.1" stroke-linecap="round"/>
<line x1="939.4" y1="494.4" x2="874.5" y2="620" stroke="#a855c0" stroke-width="4.7" stroke-linecap="round"/>
<circle cx="939.4" cy="494.4" r="2.75" fill="#6a8a50"/>
<line x1="939.4" y1="507" x2="876.1" y2="620" stroke="#b721a7" stroke-width="6.1" stroke-linecap="round"/>
<line x1="939.4" y1="507" x2="876.1" y2="620" stroke="#ff2ee8" stroke-width="4.7" stroke-linecap="round"/>
<circle cx="939.4" cy="507" r="2.75" fill="#6a8a50"/>
<rect x="340.4" y="571.8" width="144" height="14" fill="#7b7b7b"/>
<path d="M355 538 L362 531.5 L462 531.5 L470.3 538 L470.3 597 L355 597 Z" fill="#9b9b9b"/>
<rect x="355" y="553" width="7" height="50" fill="#050505"/>
<rect x="462.6" y="555" width="7.7" height="50" fill="#5a5a5a"/>
<rect x="362" y="560" width="100.6" height="45" fill="#333"/>
<path d="M392 529.5 L352.1 517 Q346 519 347.9 525 L380 551.5 Z" fill="#fff"/><circle cx="386" cy="540.5" r="12.5" fill="#fff"/>
<ellipse cx="385" cy="539.5" rx="9.5" ry="6" fill="#8a8a8a"/>
<path d="M349 520 Q354 515 359 519" fill="none" stroke="#bbb" stroke-width="1.2"/>
<text x="409" y="548.5" font-family="Liberation Sans" font-weight="bold" font-size="11" fill="#f2bb3a" stroke="#f2bb3a" stroke-width="0.5" textLength="48" lengthAdjust="spacingAndGlyphs">SERVO</text>
<ellipse cx="482" cy="597" rx="8" ry="2" fill="#f0e040"/>
</g></svg>
<div class="a" style="left:1270px;top:81px;width:10px;height:516px;background:#e6ecf2"><div class="a" style="left:1px;top:201.5px;width:9px;height:81.5px;background:#a8a8a8"></div></div>
<div class="a" style="left:0;top:597px;width:1280px;height:10px;background:#f0f2f5"><div class="a" style="left:583px;top:0;width:209px;height:9px;background:#ababab"></div></div>
<svg style="left:0;top:0" width="200" height="600"><g stroke="#9c9c9c" stroke-width="3.2" fill="none" stroke-linecap="round"><path d="M43.5 549 Q37 548 37 555 L37 570"/><path d="M33 556 H43"/><path d="M47.5 570 L47.5 559 Q48 556 51 556 L56 556"/><path d="M64.5 556 V570"/><path d="M77 549 V567 Q77 570 80 570 L81 570"/><path d="M71.5 556 H81"/><path d="M85 556 H97 L85 570 H96"/><path d="M106.5 556 V570"/><path d="M114 570 V556 M114 559 Q116 556 121 556 Q125 556 125 560 V570"/><path d="M145 556 V574 Q145 577.5 141 577.5 L133 577.5"/><path d="M145 560 Q145 556 139.5 556 Q134 556 134 563 Q134 570 139.5 570 Q145 570 145 564"/></g><g stroke="#9c9c9c" stroke-width="1.8" fill="#fff"><circle cx="48.5" cy="570" r="2.4"/><circle cx="64.5" cy="549" r="2.4"/><circle cx="97.5" cy="570" r="2.4"/><circle cx="106.5" cy="549" r="2.4"/><circle cx="125.5" cy="570" r="2.4"/></g></svg>
<div class="a" style="left:0;top:167px;width:187.5px;height:366.5px;background:#e8e8e8"></div>
<div class="a" style="left:0;top:167px;width:182px;height:29.5px;background:#ebebeb"></div>
<div class="a" style="left:0;top:196px;width:182px;height:1px;background:#c4c4c4"></div>
<div class="a" style="left:0;top:197px;width:182px;height:23.5px;background:#dcdcdc"></div>
<div class="a" style="left:0;top:220px;width:182px;height:1px;background:#c8c8c8"></div>
<div class="a" style="left:0;top:221px;width:182px;height:306.5px;background:#d9d9d9"></div>
<div class="a" style="left:162px;top:172px;width:18px;height:18px;background:#a9a9a9"></div>
<svg style="left:167.5px;top:178px" width="7" height="7"><path d="M0.5 0.5 L6.5 6.5 M6.5 0.5 L0.5 6.5" stroke="#fff" stroke-width="1.5"/></svg>
<div class="a" style="left:19px;top:175.00px;font-size:14px;line-height:14px;color:#555;font-weight:normal;font-family:'Liberation Sans',sans-serif;white-space:nowrap;transform:scaleX(0.9670);transform-origin:0 0;">Composants</div>
<div class="a" style="left:5.5px;top:204.00px;font-size:12px;line-height:12px;color:#3a3a3a;font-weight:bold;font-family:'Liberation Sans',sans-serif;white-space:nowrap;transform:scaleX(1.1160);transform-origin:0 0;">Parts</div>
<div class="a" style="left:0;top:209px;width:2px;height:1.5px;background:#666"></div>
<div class="a" style="left:0px;top:232.00px;font-size:10px;line-height:10px;color:#555;font-weight:normal;font-family:'Liberation Sans',sans-serif;white-space:nowrap;transform:scaleX(0.6293);transform-origin:0 0;clip-path:inset(0 0 0 0)">e</div>
<svg style="left:165px;top:204px" width="14" height="10"><path d="M1 1.5 L4 1.5 L2.5 3.5 Z" fill="#444"/><path d="M6 1.5 H13 M6 4.5 H13 M6 7.5 H13" stroke="#444" stroke-width="1.2"/></svg>
<div class="a" style="left:166px;top:224px;width:9px;height:61px;background:#a8a8a8"></div>
<div class="a" style="left:0;top:248px;width:3px;height:34px;background:#fff"></div>
<div class="a" style="left:7.5px;top:248px;width:33.5px;height:34px;background:#fff"></div>
<div class="a" style="left:46px;top:248px;width:33.5px;height:34px;background:#fff"></div>
<div class="a" style="left:84.4px;top:248px;width:33.5px;height:34px;background:#fff"></div>
<div class="a" style="left:123px;top:248px;width:33.5px;height:34px;background:#fff"></div>
<div class="a" style="left:0;top:287px;width:3px;height:34px;background:#fff"></div>
<div class="a" style="left:7.5px;top:287px;width:33.5px;height:34px;background:#fff"></div>
<div class="a" style="left:46px;top:287px;width:33.5px;height:34px;background:#fff"></div>
<div class="a" style="left:84.4px;top:287px;width:33.5px;height:34px;background:#fff"></div>
<div class="a" style="left:123px;top:287px;width:33.5px;height:34px;background:#fff"></div>
<div class="a" style="left:0;top:345px;width:3px;height:34px;background:#fff"></div>
<div class="a" style="left:7.5px;top:345px;width:33.5px;height:34px;background:#fff"></div>
<div class="a" style="left:46px;top:345px;width:33.5px;height:34px;background:#fff"></div>
<div class="a" style="left:84.4px;top:345px;width:33.5px;height:34px;background:#fff"></div>
<div class="a" style="left:123px;top:345px;width:33.5px;height:34px;background:#fff"></div>
<div class="a" style="left:0;top:383px;width:3px;height:34px;background:#fff"></div>
<div class="a" style="left:7.5px;top:383px;width:33.5px;height:34px;background:#fff"></div>
<div class="a" style="left:46px;top:383px;width:33.5px;height:34px;background:#fff"></div>
<div class="a" style="left:84.4px;top:383px;width:33.5px;height:34px;background:#fff"></div>
<div class="a" style="left:123px;top:383px;width:33.5px;height:34px;background:#fff"></div>
<div class="a" style="left:0;top:422px;width:3px;height:34px;background:#fff"></div>
<div class="a" style="left:7.5px;top:422px;width:33.5px;height:34px;background:#fff"></div>
<div class="a" style="left:46px;top:422px;width:33.5px;height:34px;background:#fff"></div>
<div class="a" style="left:84.4px;top:422px;width:33.5px;height:34px;background:#fff"></div>
<div class="a" style="left:123px;top:422px;width:33.5px;height:34px;background:#fff"></div>
<div class="a" style="left:0;top:460.5px;width:3px;height:34px;background:#fff"></div>
<div class="a" style="left:7.5px;top:460.5px;width:33.5px;height:34px;background:#fff"></div>
<div class="a" style="left:46px;top:460.5px;width:33.5px;height:34px;background:#fff"></div>
<div class="a" style="left:84.4px;top:460.5px;width:33.5px;height:34px;background:#fff"></div>
<div class="a" style="left:123px;top:460.5px;width:33.5px;height:34px;background:#fff"></div>
<div class="a" style="left:0;top:498px;width:3px;height:22px;background:#fff"></div>
<svg style="left:0;top:0" width="188" height="540"><path d="M18.5 256.5 Q24 254 29.5 256.5 L31 266 Q24 269 17 266 Z" fill="#2f6fc0"/><path d="M19 267 Q17 272 20 280 M29 267 Q31 272 28 280" stroke="#8a8a8a" stroke-width="1.6" fill="none"/><rect x="55" y="253" width="15" height="23" rx="5" fill="#f0a020"/><path d="M58 275 L59 280 M66 275 L65 280" stroke="#c08020" stroke-width="1.3"/><rect x="95.5" y="250" width="13" height="30" rx="4" fill="#1e1650"/><ellipse cx="102" cy="253" rx="5" ry="2.5" fill="#c8c0d8"/><path d="M125 267 Q128 257 131 265 Q134 257 137 265 Q140 257 143 265 Q146 257 149 265 Q152 257 155 267" stroke="#c83a20" stroke-width="3" fill="none"/><path d="M16.25 296 Q16.25 290 24.25 290 Q32.25 290 32.25 296 L32.25 309 L16.25 309 Z" fill="#151515"/><path d="M21.25 309 L17.25 318 M24.25 309 L24.25 318 M27.25 309 L31.25 318" stroke="#888" stroke-width="1.5"/><text x="24.25" y="306" text-anchor="middle" font-family="Liberation Sans" font-weight="bold" font-size="8" fill="#ddd">P</text><path d="M54.5 296 Q54.5 290 62.5 290 Q70.5 290 70.5 296 L70.5 309 L54.5 309 Z" fill="#151515"/><path d="M59.5 309 L55.5 318 M62.5 309 L62.5 318 M65.5 309 L69.5 318" stroke="#888" stroke-width="1.5"/><text x="62.5" y="306" text-anchor="middle" font-family="Liberation Sans" font-weight="bold" font-size="8" fill="#ddd">N</text><rect x="87" y="290" width="28" height="16" fill="#8e8e8e"/><ellipse cx="101" cy="297" rx="5.5" ry="3.5" fill="#fff"/><rect x="87" y="306" width="28" height="12" fill="#111"/><rect x="87" y="304" width="28" height="2" fill="#555"/><rect x="124.5" y="289" width="30" height="29" fill="#000"/><circle cx="139.5" cy="302" r="9.5" fill="#6a6a6a"/><text x="139.5" y="307" text-anchor="middle" font-family="Liberation Sans" font-weight="bold" font-size="13" fill="#111">?</text><rect x="18" y="357" width="13" height="15" fill="#555"/><rect x="19.5" y="358" width="10" height="12" fill="#ddd"/><rect x="17.5" y="370" width="14" height="2.5" fill="#222"/><rect x="20.5" y="347" width="7.5" height="20" rx="3.5" fill="#111"/><path d="M19.5 372 V376 M24.3 372 V376 M29 372 V376" stroke="#999" stroke-width="1.2"/><rect x="50" y="359" width="28" height="12" rx="1" fill="#333"/><rect x="50" y="363" width="28" height="1" fill="#555"/><rect x="63" y="352" width="1.5" height="8" fill="#555"/><rect x="65.5" y="352" width="1.5" height="8" fill="#555"/><rect x="86.5" y="357.5" width="29" height="6" fill="#222"/><path d="M88 360.5 H114" stroke="#999" stroke-width="0.8" stroke-dasharray="1 1"/><path d="M127 366 L151 366" stroke="#d8a830" stroke-width="2.5"/><ellipse cx="139" cy="361" rx="11" ry="12" fill="#e2b236"/><ellipse cx="138.5" cy="361" rx="8" ry="9" fill="#9a9aa8"/><path d="M131 356 Q140 350 146 357 Q139 362 136 368 Z" fill="#e8c040"/><rect x="13" y="397" width="24" height="6" fill="#555"/><rect x="17" y="396" width="14" height="4" fill="#eee"/><path d="M53.5 385 V414 M71.5 385 V414" stroke="#aaa" stroke-width="1.5"/><rect x="51.5" y="389" width="22" height="21.5" fill="#999"/><circle cx="62.5" cy="399.8" r="6.3" fill="#8a5848"/><circle cx="54.5" cy="392" r="1.6" fill="#111"/><circle cx="70.5" cy="392" r="1.6" fill="#111"/><circle cx="54.5" cy="408" r="1.6" fill="#111"/><circle cx="70.5" cy="408" r="1.6" fill="#111"/><rect x="92" y="392" width="21" height="10" fill="#111"/><rect x="100" y="389" width="5" height="4" fill="#333"/><path d="M96 402 V411 M102.5 402 V411 M109 402 V411" stroke="#999" stroke-width="1.3"/><path d="M129 394 L142 388 L150 404 L138 410 Z" fill="#b8b8b8"/><ellipse cx="135.5" cy="391" rx="7" ry="3" transform="rotate(-25 135.5 391)" fill="#e0e0e0" stroke="#999" stroke-width="0.6"/><path d="M144 406 L145 415 M148 402 L151 415" stroke="#999" stroke-width="1.2" fill="none"/><path d="M10 438.5 H40" stroke="#9a6a50" stroke-width="1.5"/><path d="M56 438 Q50 438 50 444 L50 454 M70 438 Q76 438 76 444 L76 454" stroke="#999" stroke-width="1.6" fill="none"/><path d="M55 438 L58 433 L68 433 L71 438 L68 443 L58 443 Z" fill="#7a2a2a"/><rect x="59.5" y="434.5" width="7" height="7" fill="#d89a9a"/><rect x="87" y="430.5" width="30" height="10.5" rx="2" fill="#444"/><circle cx="91" cy="437.5" r="2" fill="#111"/><circle cx="113" cy="437.5" r="2" fill="#111"/><path d="M99 441 V447 M102.5 441 V447 M106 441 V447" stroke="#e08040" stroke-width="1"/><path d="M102.5 441 V447" stroke="#4060c0" stroke-width="1"/><path d="M106 441 V447" stroke="#e0c040" stroke-width="1"/><rect x="123.5" y="422.5" width="33" height="33" rx="1.5" fill="#c81e14" stroke="#a01008"/><circle cx="139" cy="438" r="3" fill="#222"/><path d="M127 428 V452" stroke="#f09080" stroke-width="1.3" stroke-dasharray="1.5 2"/><path d="M140 450 H152 M151 430 V450" stroke="#f0a090" stroke-width="0.8"/><rect x="11" y="463" width="27" height="30" fill="#2a9040"/><circle cx="27" cy="480" r="3.5" fill="#333"/><path d="M14 467 V490" stroke="#cfe8cf" stroke-width="1.5" stroke-dasharray="1.5 2.2"/><path d="M49 477.5 Q63 472 77 477.5 Q63 483 49 477.5 Z" fill="#a8e0c8" stroke="#70b090" stroke-width="0.8"/><path d="M101 466 V485" stroke="#111" stroke-width="3"/><path d="M94 490 Q101 482 108 490 Z" fill="#111"/><rect x="128.5" y="464" width="24" height="27" fill="#3a3a3a"/><text x="131" y="475" font-family="Liberation Sans" font-size="7" fill="#bbb">RFID</text><text x="131" y="485" font-family="Liberation Sans" font-size="7" fill="#bbb">ID12</text></svg>
<div class="a" style="left:0;top:606.5px;width:1280px;height:62px;background:#d8321f"></div>
<div class="a" style="left:0;top:668.3px;width:1280px;height:13.7px;background:#8b1f0f"></div>
<div class="a" style="left:0;top:682px;width:1280px;height:38px;background:#3e8fc5"></div>
<svg style="left:0;top:0" width="260" height="720"><path d="M31 615 L45.5 615 L52 621.5 L52 636 L31 636 Z" fill="none" stroke="#fff" stroke-width="2"/><path d="M45 615.5 L45 622 L51.5 622" fill="none" stroke="#fff" stroke-width="1.6"/><path d="M123 617 Q112 616 111 626 Q111 636 121 636 Q128 636 131 630" fill="none" stroke="#c9a098" stroke-width="2"/><path d="M131 631 L131 620 M126 625 L131 619.5 L136 625" fill="none" stroke="#c9a098" stroke-width="2"/><circle cx="143.5" cy="634.5" r="3.5" fill="#d8908a"/><path d="M141.8 633.8 L145.2 633.8 L143.5 636 Z" fill="#fff"/><path d="M196 622 L203 627 L196 632 Z M216 622 L209 627 L216 632 Z" fill="#c9a098"/><path d="M206 619 V636" stroke="#c9a098" stroke-width="1"/><path d="M199 618 Q206 612 212 618 M209.5 615.5 L212.5 618.5 L214 614" fill="none" stroke="#c9a098" stroke-width="1.6"/><circle cx="225.5" cy="635" r="3.5" fill="#d8908a"/><path d="M223.8 634.3 L227.2 634.3 L225.5 636.5 Z" fill="#fff"/></svg>
<div class="a" style="left:10px;top:646.00px;font-size:10.5px;line-height:10.5px;color:#fbe5df;font-weight:normal;font-family:'Liberation Sans',sans-serif;white-space:nowrap;transform:scaleX(0.9257);transform-origin:0 0;">Aide-mémoire</div>
<div class="a" style="left:103px;top:646.00px;font-size:10.5px;line-height:10.5px;color:#fbe5df;font-weight:normal;font-family:'Liberation Sans',sans-serif;white-space:nowrap;transform:scaleX(1.0100);transform-origin:0 0;">Rotation</div>
<div class="a" style="left:182px;top:646.00px;font-size:10.5px;line-height:10.5px;color:#fbe5df;font-weight:normal;font-family:'Liberation Sans',sans-serif;white-space:nowrap;transform:scaleX(0.9745);transform-origin:0 0;">Retourner</div>
<div class="a" style="left:492.7px;top:620.00px;font-size:16px;line-height:16px;color:#f6a38f;font-weight:normal;font-family:'Liberation Sans',sans-serif;white-space:nowrap;transform:scaleX(0.9352);transform-origin:0 0;">8 des 12 réseaux ont été routé - 4 connecteur(s) doivent êtres reliés</div>
<div class="a" style="left:1192.5px;top:611.4px;width:78.3px;height:52.5px;background:#07a552;border-bottom:5.5px solid #03773a"></div>
<svg style="left:1210px;top:615px" width="45" height="26"><path d="M6 22 L6 17 Q6 11 12 11 L17 11 M13.5 7.5 L17.5 11 L13.5 14.5" fill="none" stroke="#fff" stroke-width="2"/><g fill="none" stroke="#fff" stroke-width="1.8"><rect x="21" y="3.5" width="6.5" height="6.5"/><rect x="31" y="3.5" width="6.5" height="6.5"/><rect x="21" y="13.5" width="6.5" height="6.5"/><rect x="31" y="13.5" width="6.5" height="6.5"/></g></svg>
<div class="a" style="left:1211px;top:645.00px;font-size:11px;line-height:11px;color:#e8f5ec;font-weight:normal;font-family:'Liberation Sans',sans-serif;white-space:nowrap;transform:scaleX(0.9244);transform-origin:0 0;">Partager</div>
<div class="a" style="left:1016.4px;top:672.00px;font-size:9px;line-height:9px;color:#fff;font-weight:bold;font-family:'Liberation Sans',sans-serif;white-space:nowrap;transform:scaleX(1.1304);transform-origin:0 0;">6.178 -1.370 in</div>
<div class="a" style="left:1104px;top:673.00px;font-size:10px;line-height:10px;color:#f0d0c8;font-weight:normal;font-family:'Liberation Sans',sans-serif;white-space:nowrap;transform:scaleX(0.9522);transform-origin:0 0;">150 %</div>
<svg style="left:1140px;top:668px" width="140" height="16"><circle cx="8.5" cy="9" r="5.5" fill="none" stroke="#e8c8c0" stroke-width="1.3"/><path d="M6 9 H11" stroke="#e8c8c0" stroke-width="1.3"/><path d="M27 10 H101" stroke="#e04030" stroke-width="2.6"/><circle cx="29" cy="10" r="4.8" fill="#fff"/><circle cx="111.5" cy="9" r="5.5" fill="none" stroke="#e8c8c0" stroke-width="1.3"/><path d="M109 9 H114 M111.5 6.5 V11.5" stroke="#e8c8c0" stroke-width="1.3"/></svg>
<div class="a" style="left:74px;top:683px;width:54px;height:36px;background:#7fb1d8;border:1px solid #9cc6e6"></div>
<div class="a" style="left:481px;top:683px;width:54px;height:36px;background:#7fb1d8;border:1px solid #9cc6e6"></div>
<svg style="left:0;top:0" width="1280" height="720"><ellipse cx="44" cy="700.5" rx="17" ry="6" transform="rotate(-48 44 700.5)" fill="none" stroke="#f2c21e" stroke-width="2.6"/><path d="M53 702.5 H36.5 M53.5 702.5 A9 9 0 1 0 50.5 709.5" fill="none" stroke="#62ccf2" stroke-width="4.6"/><path d="M87 692 H96 L98 694 H114 V714 H87 Z" fill="#f2d06a"/><rect x="89" y="690" width="6" height="3" fill="#e8a030"/><rect x="92" y="704" width="18" height="9" fill="#5aa8e0"/><rect x="95" y="700" width="12" height="5" fill="#9ad0f0"/><rect x="146" y="687.5" width="26" height="26" rx="5" fill="#8a0a0a" stroke="#5a0a0a"/><circle cx="159" cy="700.5" r="6.5" fill="none" stroke="#fff" stroke-width="2"/><path d="M159 692 V700" stroke="#8a0a0a" stroke-width="4"/><path d="M159 693 V700" stroke="#fff" stroke-width="2"/><rect x="204" y="687.5" width="27" height="27" rx="5" fill="#c89050"/><rect x="206.5" y="690" width="22" height="22" rx="3.5" fill="#fff4e8"/><rect x="207.5" y="701" width="20" height="10" fill="#f0a030" opacity="0.85"/><circle cx="217.5" cy="699" r="5.5" fill="#7a7a6a"/><circle cx="217.5" cy="699" r="2" fill="#222"/><path d="M217.5 704 V711" stroke="#5a3a20" stroke-width="1.5"/><rect x="261" y="687.5" width="29" height="28" rx="5" fill="#d08a40"/><rect x="263" y="689.5" width="25" height="22" rx="3" fill="#8a8f96"/><path d="M263 697 L268 692 L272 696 L277 690 L282 695 L288 691 V689.5 H263 Z" fill="#9ad8f0"/><path d="M266 693 L270 696 M276 692 L281 696" stroke="#fff" stroke-width="1.6"/><text x="266" y="706" font-family="Liberation Sans" font-size="7.5" font-weight="bold" fill="#2a3040">DOC</text><rect x="263" y="708" width="25" height="3.5" fill="#3a3a3a"/><rect x="319" y="687.5" width="29" height="28" rx="6" fill="#123a60"/><rect x="321" y="689.5" width="25" height="24" rx="4.5" fill="#2a86c8"/><rect x="325.5" y="692.5" width="10" height="14" fill="none" stroke="#fff" stroke-width="1.3"/><path d="M327.5 695.5 H333.5 M327.5 698.5 H333.5 M327.5 701.5 H331" stroke="#fff" stroke-width="1"/><circle cx="338.5" cy="705" r="4.2" fill="#fff"/><circle cx="338.5" cy="705" r="5.6" fill="none" stroke="#fff" stroke-width="1.6" stroke-dasharray="1.8 1.6"/><circle cx="338.5" cy="705" r="1.6" fill="#2a86c8"/><rect x="377" y="687.5" width="29" height="28" rx="6" fill="#a07850"/><circle cx="391.5" cy="701.5" r="11" fill="#3a3a3a"/><circle cx="391.5" cy="701.5" r="6" fill="#222"/><circle cx="391.5" cy="701.5" r="2.5" fill="#666"/><path d="M450 701.5 L438.31 694.75 A13.5 13.5 0 0 1 461.69 694.75 Z" fill="#dd4433"/><path d="M450 701.5 L461.69 694.75 A13.5 13.5 0 0 1 450.00 715.00 Z" fill="#f4c21a"/><path d="M450 701.5 L450.00 715.00 A13.5 13.5 0 0 1 438.31 694.75 Z" fill="#2ba24c"/><circle cx="450" cy="701.5" r="6.2" fill="#fff"/><circle cx="450" cy="701.5" r="4.8" fill="#3b80d8"/><rect x="492" y="686" width="31" height="30" fill="#d52a1e"/><path d="M513 693 Q506 690 506 697 L506 708 M502 698 H512" stroke="#fff" stroke-width="2.5" fill="none"/><circle cx="506" cy="710" r="2.6" fill="none" stroke="#fff" stroke-width="1.8"/><path d="M1105 705 L1109 700 L1113 705 Z" fill="#fff"/><rect x="1130.5" y="695.5" width="9" height="14" rx="1.5" fill="none" stroke="#fff" stroke-width="1.3"/><rect x="1133" y="703" width="4" height="5" fill="#fff"/><rect x="1133" y="694" width="4" height="2" fill="#fff"/><path d="M1148 708 V706 M1151 708 V703.5 M1154 708 V701 M1157 708 V698.5 M1160 708 V696" stroke="#fff" stroke-width="2"/><path d="M1171 699 H1174 L1178 695 V710 L1174 706 H1171 Z" fill="#fff"/><path d="M1180 698 Q1183 702.5 1180 707 M1182.5 696 Q1187 702.5 1182.5 709" stroke="#fff" stroke-width="1.2" fill="none"/></svg>
<div class="a" style="left:1216px;top:689.00px;font-size:12px;line-height:12px;color:#fff;font-weight:normal;font-family:'Liberation Sans',sans-serif;white-space:nowrap;transform:scaleX(0.8751);transform-origin:0 0;">21:11</div>
<div class="a" style="left:1201px;top:705.00px;font-size:11.5px;line-height:11.5px;color:#fff;font-weight:normal;font-family:'Liberation Sans',sans-serif;white-space:nowrap;transform:scaleX(0.9788);transform-origin:0 0;">25/11/2014</div>
</body></html>
